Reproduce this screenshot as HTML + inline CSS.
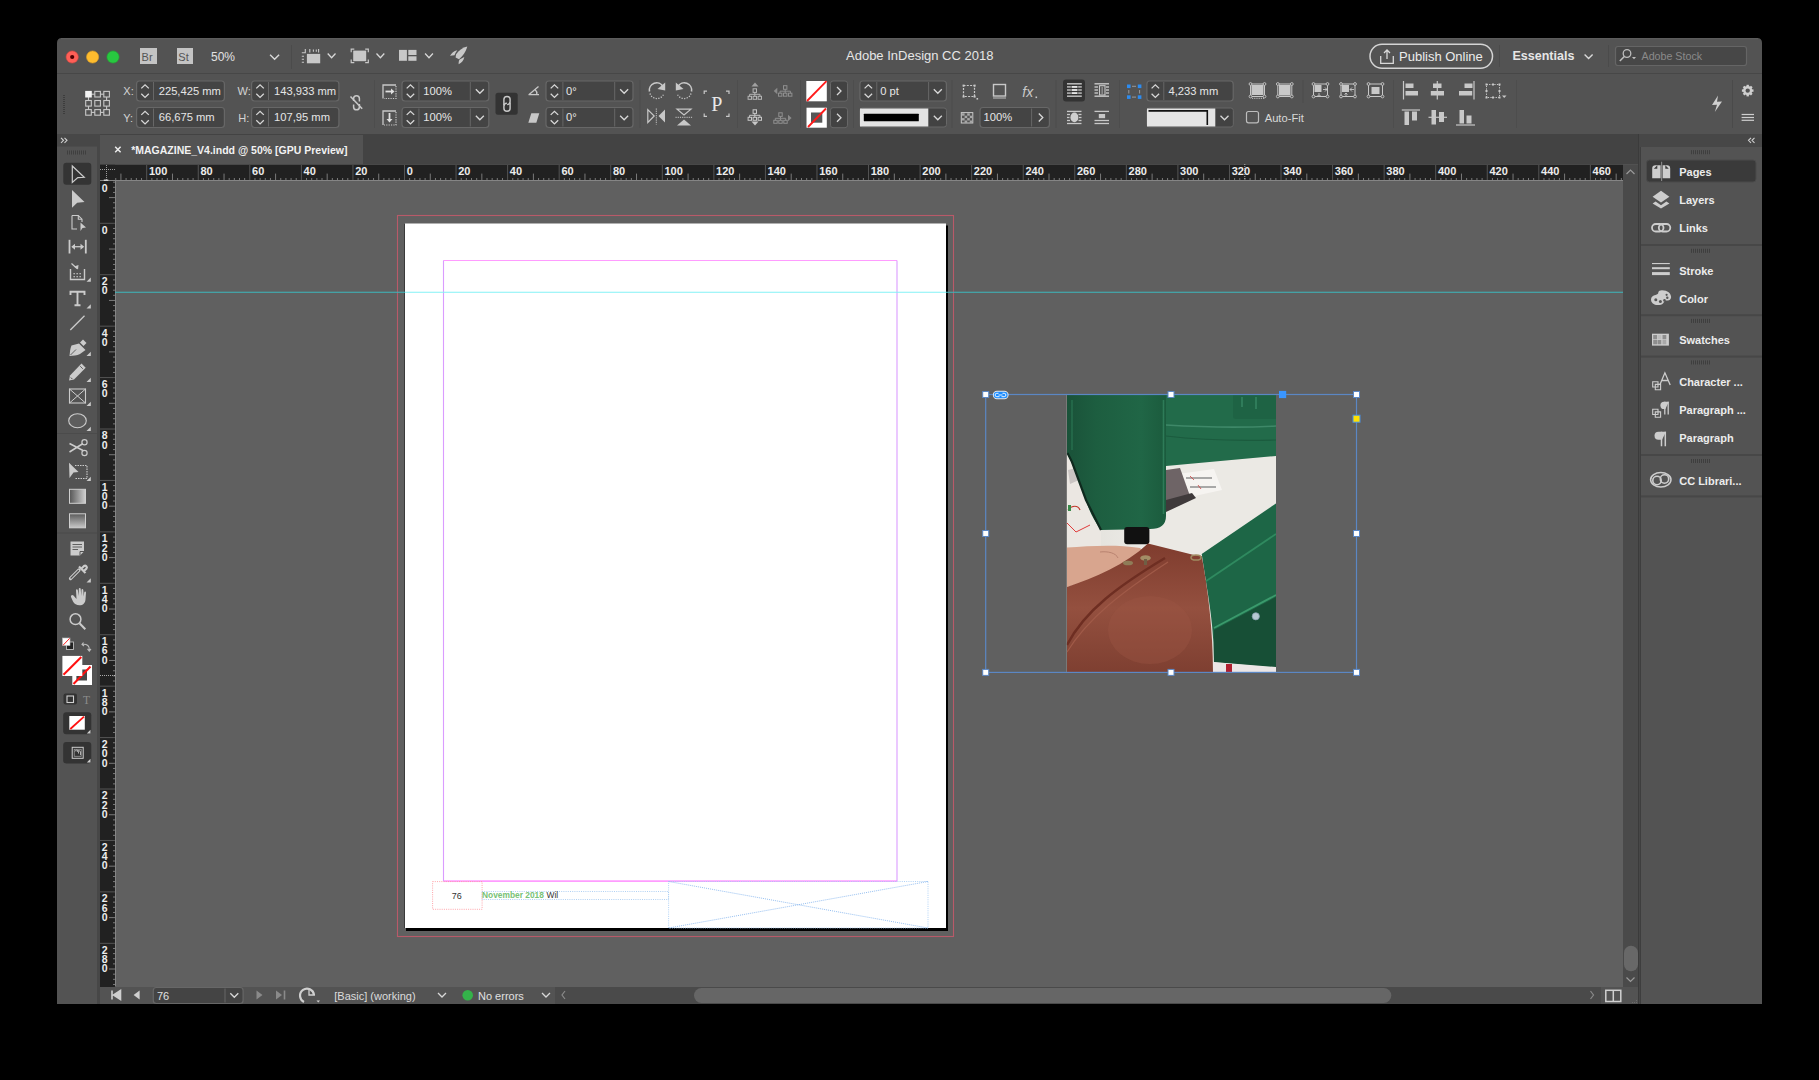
<!DOCTYPE html>
<html><head><meta charset="utf-8"><style>
html,body{margin:0;padding:0;width:1819px;height:1080px;overflow:hidden;background:#000}
svg{display:block}
text{font-family:"Liberation Sans",sans-serif;white-space:pre}
</style></head><body>
<svg width="1819" height="1080" viewBox="0 0 1819 1080">
<rect x="0" y="0" width="1819" height="1080" fill="#000"/>
<path d="M57 43 Q57 38 62 38 L1757 38 Q1762 38 1762 43 L1762 1004 L57 1004 Z" fill="#535353" />
<line x1="61" y1="38.6" x2="1758" y2="38.6" stroke="#5c5c5c" stroke-width="1.2" />
<rect x="57" y="73" width="1705" height="1" fill="#474747" rx="0" />
<circle cx="72.2" cy="57" r="6.1" fill="#fe5f57" stroke="#e2463f" stroke-width="0.6"/>
<circle cx="72.2" cy="57" r="2.1" fill="#4d0002"/>
<circle cx="92.6" cy="57" r="6.1" fill="#febc2e" stroke="#df9f24" stroke-width="0.6"/>
<circle cx="113" cy="57" r="6.1" fill="#28c840" stroke="#1fab2f" stroke-width="0.6"/>
<rect x="140" y="48" width="17" height="16" fill="#c4c4c4" rx="0" />
<text x="141.6" y="60.5" font-size="11" fill="#555" font-weight="400" text-anchor="start" >Br</text>
<rect x="177" y="48" width="16" height="16" fill="#c4c4c4" rx="0" />
<text x="178.3" y="60.5" font-size="11" fill="#555" font-weight="400" text-anchor="start" >St</text>
<text x="211" y="61" font-size="12" fill="#e2e2e2" font-weight="400" text-anchor="start" >50%</text>
<path d="M270.1 54.75 L274.6 59.25 L279.1 54.75" fill="none" stroke="#d8d8d8" stroke-width="1.4" />
<rect x="291" y="45" width="1" height="24" fill="#4b4b4b" rx="0" />
<rect x="306.9" y="53.9" width="13.3" height="9.4" fill="#c8c8c8" rx="0" />
<path d="M309.8 49V52.5M313.4 49.5V51.8M316.3 49.5V51.8M318.6 49V52.5M305.3 49V52.8H301.8M301.8 56.2H304M301.8 59.3H304M301.8 62.3H304" fill="none" stroke="#c8c8c8" stroke-width="1.1" />
<path d="M327.70000000000005 53.5 L331.6 57.7 L335.5 53.5" fill="none" stroke="#d8d8d8" stroke-width="1.3" />
<rect x="353.2" y="50.6" width="13" height="10.6" fill="#c8c8c8" rx="0" />
<path d="M351.2 52.3V49.2H354.3M365.2 49.2h3.1v3.1M368.3 59.6v3.1h-3.1M354.3 62.7h-3.1v-3.1" fill="none" stroke="#c8c8c8" stroke-width="1.2" />
<path d="M376.5 53.5 L380.4 57.7 L384.29999999999995 53.5" fill="none" stroke="#d8d8d8" stroke-width="1.3" />
<rect x="399" y="49.9" width="7.9" height="10.9" fill="#c8c8c8" rx="0" />
<rect x="408.3" y="49.9" width="8.2" height="5.1" fill="#c8c8c8" rx="0" />
<rect x="408.3" y="56.3" width="8.2" height="4.5" fill="#c8c8c8" rx="0" />
<path d="M425.1 53.5 L429 57.7 L432.9 53.5" fill="none" stroke="#d8d8d8" stroke-width="1.3" />
<path d="M467.3 46.5C462.5 47.5 458.5 50.5 456 54.5L455.6 57.5L459 59.2C462.5 56.5 466 51.5 467.3 46.5Z" fill="#c8c8c8" />
<path d="M450 55.8C451.5 53 453.8 51 457.3 50.2C456 51.8 455 53.5 454.5 55.2Z" fill="#c8c8c8" />
<path d="M464.3 57C463.6 60.5 461.6 62.8 458.6 64.3C458.6 62 459 60.5 459.6 59.6Z" fill="#c8c8c8" />
<text x="846" y="60.4" font-size="13" fill="#e6e6e6" font-weight="400" text-anchor="start" >Adobe InDesign CC 2018</text>
<rect x="1370" y="44.3" width="122.5" height="24" fill="none" stroke="#d4d4d4" stroke-width="1.5" rx="12" />
<path d="M1380.7 56v7.3h12.6V56M1387 50v9M1384 53l3-3 3 3" fill="none" stroke="#d8d8d8" stroke-width="1.3" />
<text x="1399" y="61" font-size="13" fill="#ececec" font-weight="400" text-anchor="start" >Publish Online</text>
<rect x="1499" y="45" width="1" height="22" fill="#4b4b4b" rx="0" />
<text x="1512.5" y="60" font-size="12.5" fill="#e6e6e6" font-weight="700" text-anchor="start" >Essentials</text>
<path d="M1584.6 54.5 L1588.6 58.5 L1592.6 54.5" fill="none" stroke="#d8d8d8" stroke-width="1.4" />
<rect x="1608" y="45" width="1" height="22" fill="#4b4b4b" rx="0" />
<rect x="1615.5" y="46.5" width="131" height="19" fill="#474747" stroke="#656565" stroke-width="1.2" rx="2.5" />
<circle cx="1627" cy="53.5" r="3.8" fill="none" stroke="#bdbdbd" stroke-width="1.3"/>
<path d="M1624.3 56.5L1619.8 61" fill="none" stroke="#bdbdbd" stroke-width="1.6" />
<path d="M1632 57h4l-2 2.3z" fill="#bdbdbd" />
<text x="1641.5" y="60" font-size="10.7" fill="#8a8a8a" font-weight="400" text-anchor="start" >Adobe Stock</text>
<rect x="63" y="95" width="2" height="1" fill="#3d3d3d" rx="0" />
<rect x="63" y="97" width="2" height="1" fill="#3d3d3d" rx="0" />
<rect x="63" y="99" width="2" height="1" fill="#3d3d3d" rx="0" />
<rect x="63" y="101" width="2" height="1" fill="#3d3d3d" rx="0" />
<rect x="63" y="103" width="2" height="1" fill="#3d3d3d" rx="0" />
<rect x="63" y="105" width="2" height="1" fill="#3d3d3d" rx="0" />
<rect x="63" y="107" width="2" height="1" fill="#3d3d3d" rx="0" />
<rect x="63" y="109" width="2" height="1" fill="#3d3d3d" rx="0" />
<rect x="63" y="111" width="2" height="1" fill="#3d3d3d" rx="0" />
<rect x="63" y="113" width="2" height="1" fill="#3d3d3d" rx="0" />
<line x1="88.5" y1="94.2" x2="97.6" y2="94.2" stroke="#c8c8c8" stroke-width="1.1" />
<line x1="97.6" y1="94.2" x2="106.6" y2="94.2" stroke="#c8c8c8" stroke-width="1.1" />
<line x1="88.5" y1="94.2" x2="88.5" y2="103.3" stroke="#c8c8c8" stroke-width="1.1" />
<line x1="88.5" y1="103.3" x2="88.5" y2="112.39999999999999" stroke="#c8c8c8" stroke-width="1.1" />
<line x1="106.6" y1="94.2" x2="106.6" y2="103.3" stroke="#c8c8c8" stroke-width="1.1" />
<line x1="106.6" y1="103.3" x2="106.6" y2="112.39999999999999" stroke="#c8c8c8" stroke-width="1.1" />
<line x1="88.5" y1="112.39999999999999" x2="97.6" y2="112.39999999999999" stroke="#c8c8c8" stroke-width="1.1" />
<line x1="97.6" y1="112.39999999999999" x2="106.6" y2="112.39999999999999" stroke="#c8c8c8" stroke-width="1.1" />
<rect x="85.2" y="90.9" width="6.6" height="6.6" fill="#f4f4f4" rx="0" />
<rect x="85.7" y="100.5" width="5.6" height="5.6" fill="#535353" stroke="#c8c8c8" stroke-width="1.1" rx="0" />
<rect x="85.7" y="109.6" width="5.6" height="5.6" fill="#535353" stroke="#c8c8c8" stroke-width="1.1" rx="0" />
<rect x="94.8" y="91.4" width="5.6" height="5.6" fill="#535353" stroke="#c8c8c8" stroke-width="1.1" rx="0" />
<rect x="94.8" y="100.5" width="5.6" height="5.6" fill="#535353" stroke="#c8c8c8" stroke-width="1.1" rx="0" />
<rect x="94.8" y="109.6" width="5.6" height="5.6" fill="#535353" stroke="#c8c8c8" stroke-width="1.1" rx="0" />
<rect x="103.8" y="91.4" width="5.6" height="5.6" fill="#535353" stroke="#c8c8c8" stroke-width="1.1" rx="0" />
<rect x="103.8" y="100.5" width="5.6" height="5.6" fill="#535353" stroke="#c8c8c8" stroke-width="1.1" rx="0" />
<rect x="103.8" y="109.6" width="5.6" height="5.6" fill="#535353" stroke="#c8c8c8" stroke-width="1.1" rx="0" />
<text x="123.3" y="94.8" font-size="11" fill="#d4d4d4" font-weight="400" text-anchor="start" >X:</text>
<text x="123.3" y="121.5" font-size="11" fill="#d4d4d4" font-weight="400" text-anchor="start" >Y:</text>
<rect x="136.6" y="81" width="87.8" height="20" fill="#444444" stroke="#676767" stroke-width="1.2" rx="3" />
<line x1="153.5" y1="82" x2="153.5" y2="100" stroke="#676767" stroke-width="1" />
<path d="M141.3 88.39999999999999 L145.05 84.8 L148.8 88.39999999999999" fill="none" stroke="#d8d8d8" stroke-width="1.3" />
<path d="M141.3 93.8 L145.05 97.39999999999999 L148.8 93.8" fill="none" stroke="#d8d8d8" stroke-width="1.3" />
<text x="158.7" y="94.8" font-size="11.2" fill="#e6e6e6" font-weight="400" text-anchor="start" >225,425 mm</text>
<rect x="136.6" y="107.5" width="87.8" height="20" fill="#444444" stroke="#676767" stroke-width="1.2" rx="3" />
<line x1="153.5" y1="108.5" x2="153.5" y2="126.5" stroke="#676767" stroke-width="1" />
<path d="M141.3 114.89999999999999 L145.05 111.3 L148.8 114.89999999999999" fill="none" stroke="#d8d8d8" stroke-width="1.3" />
<path d="M141.3 120.3 L145.05 123.89999999999999 L148.8 120.3" fill="none" stroke="#d8d8d8" stroke-width="1.3" />
<text x="158.7" y="121.3" font-size="11.2" fill="#e6e6e6" font-weight="400" text-anchor="start" >66,675 mm</text>
<text x="237.5" y="94.8" font-size="11" fill="#d4d4d4" font-weight="400" text-anchor="start" >W:</text>
<text x="238.3" y="121.5" font-size="11" fill="#d4d4d4" font-weight="400" text-anchor="start" >H:</text>
<rect x="251.6" y="81" width="87.3" height="20" fill="#444444" stroke="#676767" stroke-width="1.2" rx="3" />
<line x1="268.5" y1="82" x2="268.5" y2="100" stroke="#676767" stroke-width="1" />
<path d="M256.3 88.39999999999999 L260.05 84.8 L263.8 88.39999999999999" fill="none" stroke="#d8d8d8" stroke-width="1.3" />
<path d="M256.3 93.8 L260.05 97.39999999999999 L263.8 93.8" fill="none" stroke="#d8d8d8" stroke-width="1.3" />
<text x="274" y="94.8" font-size="11.2" fill="#e6e6e6" font-weight="400" text-anchor="start" >143,933 mm</text>
<rect x="251.6" y="107.5" width="87.3" height="20" fill="#444444" stroke="#676767" stroke-width="1.2" rx="3" />
<line x1="268.5" y1="108.5" x2="268.5" y2="126.5" stroke="#676767" stroke-width="1" />
<path d="M256.3 114.89999999999999 L260.05 111.3 L263.8 114.89999999999999" fill="none" stroke="#d8d8d8" stroke-width="1.3" />
<path d="M256.3 120.3 L260.05 123.89999999999999 L263.8 120.3" fill="none" stroke="#d8d8d8" stroke-width="1.3" />
<text x="274" y="121.3" font-size="11.2" fill="#e6e6e6" font-weight="400" text-anchor="start" >107,95 mm</text>
<path d="M353.6 101V98.6a2.9 2.9 0 0 1 5.8 0V101.5M353.6 104.5V106.9a2.9 2.9 0 0 0 5.8 0V104" fill="none" stroke="#c8c8c8" stroke-width="1.5" />
<line x1="350.5" y1="96.5" x2="362.2" y2="108.7" stroke="#c8c8c8" stroke-width="1.6" />
<rect x="374" y="80" width="1" height="48" fill="#4d4d4d" rx="0" />
<path d="M383 98.5V85H396" fill="none" stroke="#c8c8c8" stroke-width="1.3" />
<path d="M396 86V98.5H384" fill="none" stroke="#c8c8c8" stroke-width="1.2" stroke-dasharray="1.2 1.2"/>
<path d="M385.5 91.5H392" fill="none" stroke="#e0e0e0" stroke-width="1.8" />
<path d="M391 88.5L394.5 91.5L391 94.5Z" fill="#e0e0e0" />
<path d="M383 125V111H396" fill="none" stroke="#c8c8c8" stroke-width="1.3" />
<path d="M396 112V125H384" fill="none" stroke="#c8c8c8" stroke-width="1.2" stroke-dasharray="1.2 1.2"/>
<path d="M389.5 113V120" fill="none" stroke="#e0e0e0" stroke-width="1.8" />
<path d="M386.5 119L389.5 122.5L392.5 119Z" fill="#e0e0e0" />
<rect x="402.0" y="81" width="86.8" height="20" fill="#444444" stroke="#676767" stroke-width="1.2" rx="3" />
<line x1="418.9" y1="82" x2="418.9" y2="100" stroke="#676767" stroke-width="1" />
<path d="M406.7 88.39999999999999 L410.45 84.8 L414.2 88.39999999999999" fill="none" stroke="#d8d8d8" stroke-width="1.3" />
<path d="M406.7 93.8 L410.45 97.39999999999999 L414.2 93.8" fill="none" stroke="#d8d8d8" stroke-width="1.3" />
<line x1="470.3" y1="82" x2="470.3" y2="100" stroke="#676767" stroke-width="1" />
<path d="M475.85 89.3 L479.85 93.3 L483.85 89.3" fill="none" stroke="#d8d8d8" stroke-width="1.3" />
<text x="423.3" y="94.8" font-size="11.2" fill="#e6e6e6" font-weight="400" text-anchor="start" >100%</text>
<rect x="402.0" y="107.5" width="86.8" height="20" fill="#444444" stroke="#676767" stroke-width="1.2" rx="3" />
<line x1="418.9" y1="108.5" x2="418.9" y2="126.5" stroke="#676767" stroke-width="1" />
<path d="M406.7 114.89999999999999 L410.45 111.3 L414.2 114.89999999999999" fill="none" stroke="#d8d8d8" stroke-width="1.3" />
<path d="M406.7 120.3 L410.45 123.89999999999999 L414.2 120.3" fill="none" stroke="#d8d8d8" stroke-width="1.3" />
<line x1="470.3" y1="108.5" x2="470.3" y2="126.5" stroke="#676767" stroke-width="1" />
<path d="M475.85 115.8 L479.85 119.8 L483.85 115.8" fill="none" stroke="#d8d8d8" stroke-width="1.3" />
<text x="423.3" y="121.3" font-size="11.2" fill="#e6e6e6" font-weight="400" text-anchor="start" >100%</text>
<rect x="495.5" y="92.7" width="22.2" height="22.1" fill="#333333" rx="2.5" />
<path d="M503.9 105.2V99.6A3.1 3.1 0 0 1 510.1 99.6V101.6A3 3 0 0 1 507.1 104.6" fill="none" stroke="#c8c8c8" stroke-width="1.45" />
<path d="M510.1 102.6V108.2A3.1 3.1 0 0 1 503.9 108.2V106.2A3 3 0 0 1 506.9 103.2" fill="none" stroke="#c8c8c8" stroke-width="1.45" />
<path d="M528.5 94.7H539M528.8 94.7L538.5 86.5M535 89.5Q537.3 91.5 536.8 94.5" fill="none" stroke="#c8c8c8" stroke-width="1.3" />
<path d="M531.3 113.2H539.3L536.3 122.7H528.3Z" fill="#c8c8c8" />
<rect x="546.0" y="81" width="87.0" height="20" fill="#444444" stroke="#676767" stroke-width="1.2" rx="3" />
<line x1="562.9" y1="82" x2="562.9" y2="100" stroke="#676767" stroke-width="1" />
<path d="M550.6999999999999 88.39999999999999 L554.4499999999999 84.8 L558.1999999999999 88.39999999999999" fill="none" stroke="#d8d8d8" stroke-width="1.3" />
<path d="M550.6999999999999 93.8 L554.4499999999999 97.39999999999999 L558.1999999999999 93.8" fill="none" stroke="#d8d8d8" stroke-width="1.3" />
<line x1="614.7" y1="82" x2="614.7" y2="100" stroke="#676767" stroke-width="1" />
<path d="M620.15 89.3 L624.15 93.3 L628.15 89.3" fill="none" stroke="#d8d8d8" stroke-width="1.3" />
<text x="566" y="94.8" font-size="11.2" fill="#e6e6e6" font-weight="400" text-anchor="start" >0°</text>
<rect x="546.0" y="107.5" width="87.0" height="20" fill="#444444" stroke="#676767" stroke-width="1.2" rx="3" />
<line x1="562.9" y1="108.5" x2="562.9" y2="126.5" stroke="#676767" stroke-width="1" />
<path d="M550.6999999999999 114.89999999999999 L554.4499999999999 111.3 L558.1999999999999 114.89999999999999" fill="none" stroke="#d8d8d8" stroke-width="1.3" />
<path d="M550.6999999999999 120.3 L554.4499999999999 123.89999999999999 L558.1999999999999 120.3" fill="none" stroke="#d8d8d8" stroke-width="1.3" />
<line x1="614.7" y1="108.5" x2="614.7" y2="126.5" stroke="#676767" stroke-width="1" />
<path d="M620.15 115.8 L624.15 119.8 L628.15 115.8" fill="none" stroke="#d8d8d8" stroke-width="1.3" />
<text x="566" y="121.3" font-size="11.2" fill="#e6e6e6" font-weight="400" text-anchor="start" >0°</text>
<rect x="639.5" y="80" width="1" height="48" fill="#4d4d4d" rx="0" />
<path d="M649.5 91.5 A7.3 7.3 0 0 1 663 86.5" fill="none" stroke="#c8c8c8" stroke-width="1.6" />
<path d="M665.2 82.5L665.2 90.5L657.5 89Z" fill="#c8c8c8" />
<path d="M650 93.5 A7.3 7.3 0 0 0 663.5 94.5" fill="none" stroke="#c8c8c8" stroke-width="1.3" stroke-dasharray="1.2 1.4"/>
<path d="M691.5 91.5 A7.3 7.3 0 0 0 678 86.5" fill="none" stroke="#c8c8c8" stroke-width="1.6" />
<path d="M675.8 82.5L675.8 90.5L683.5 89Z" fill="#c8c8c8" />
<path d="M691 93.5 A7.3 7.3 0 0 1 677.5 94.5" fill="none" stroke="#c8c8c8" stroke-width="1.3" stroke-dasharray="1.2 1.4"/>
<path d="M647.8 109.6V122.5L654.2 116Z" fill="none" stroke="#c8c8c8" stroke-width="1.2" />
<path d="M665 109.6V122.5L658.5 116Z" fill="#c8c8c8" />
<line x1="656.3" y1="108.5" x2="656.3" y2="124.5" stroke="#c8c8c8" stroke-width="1" stroke-dasharray="1.2 1"/>
<path d="M677 109.2H691L684 115Z" fill="none" stroke="#c8c8c8" stroke-width="1.2" />
<path d="M677 125.5H691L684 119.5Z" fill="#c8c8c8" />
<line x1="675.5" y1="117.3" x2="692.5" y2="117.3" stroke="#c8c8c8" stroke-width="1" stroke-dasharray="1.2 1"/>
<path d="M704.2 94V91.2H707M726 91.2H729V94M729 113.5V116.3H726M707 116.3H704.2V113.5" fill="none" stroke="#c8c8c8" stroke-width="1.2" />
<text x="716.8" y="111.3" font-size="20" fill="#e8e8e8" font-weight="400" text-anchor="middle" style="font-family:'Liberation Serif'">P</text>
<rect x="737" y="80" width="1" height="48" fill="#4d4d4d" rx="0" />
<rect x="753.0999999999999" y="88.8" width="3.4" height="3.6" fill="none" stroke="#b4b4b4" stroke-width="1" rx="0" />
<path d="M754.8 92.39999999999999V94.3M749.5999999999999 96.3V94.3H760.0V96.3M754.8 94.3V96.3" fill="none" stroke="#b4b4b4" stroke-width="1" />
<rect x="748.0999999999999" y="96.3" width="3.4" height="3" fill="none" stroke="#b4b4b4" stroke-width="1" rx="0" />
<rect x="753.0999999999999" y="96.3" width="3.4" height="3" fill="none" stroke="#b4b4b4" stroke-width="1" rx="0" />
<rect x="758.0999999999999" y="96.3" width="3.4" height="3" fill="none" stroke="#b4b4b4" stroke-width="1" rx="0" />
<path d="M751.5 86.6L755 82.5L758.5 86.6Z" fill="#a0a0a0" />
<rect x="783.5" y="85.7" width="3.4" height="3.6" fill="none" stroke="#8f8f8f" stroke-width="1" rx="0" />
<path d="M785.2 89.3V91.2M780.0 93.2V91.2H790.4000000000001V93.2M785.2 91.2V93.2" fill="none" stroke="#8f8f8f" stroke-width="1" />
<rect x="778.5" y="93.2" width="3.4" height="3" fill="none" stroke="#8f8f8f" stroke-width="1" rx="0" />
<rect x="783.5" y="93.2" width="3.4" height="3" fill="none" stroke="#8f8f8f" stroke-width="1" rx="0" />
<rect x="788.5" y="93.2" width="3.4" height="3" fill="none" stroke="#8f8f8f" stroke-width="1" rx="0" />
<path d="M777.3 87.8L773.7 91L777.3 94.2Z" fill="#8a8a8a" />
<rect x="753.0999999999999" y="109.8" width="3.4" height="3.6" fill="none" stroke="#c8c8c8" stroke-width="1" rx="0" />
<path d="M754.8 113.39999999999999V115.3M749.5999999999999 117.3V115.3H760.0V117.3M754.8 115.3V117.3" fill="none" stroke="#c8c8c8" stroke-width="1" />
<rect x="748.0999999999999" y="117.3" width="3.4" height="3" fill="none" stroke="#c8c8c8" stroke-width="1" rx="0" />
<rect x="753.0999999999999" y="117.3" width="3.4" height="3" fill="none" stroke="#c8c8c8" stroke-width="1" rx="0" />
<rect x="758.0999999999999" y="117.3" width="3.4" height="3" fill="none" stroke="#c8c8c8" stroke-width="1" rx="0" />
<path d="M751.5 121.4L755 125.6L758.5 121.4Z" fill="#c8c8c8" />
<rect x="778.8" y="112.8" width="3.4" height="3.6" fill="none" stroke="#8f8f8f" stroke-width="1" rx="0" />
<path d="M780.5 116.39999999999999V118.3M775.3 120.3V118.3H785.7V120.3M780.5 118.3V120.3" fill="none" stroke="#8f8f8f" stroke-width="1" />
<rect x="773.8" y="120.3" width="3.4" height="3" fill="none" stroke="#8f8f8f" stroke-width="1" rx="0" />
<rect x="778.8" y="120.3" width="3.4" height="3" fill="none" stroke="#8f8f8f" stroke-width="1" rx="0" />
<rect x="783.8" y="120.3" width="3.4" height="3" fill="none" stroke="#8f8f8f" stroke-width="1" rx="0" />
<path d="M788 114.8L791.6 118L788 121.2Z" fill="#8a8a8a" />
<rect x="800" y="80" width="1" height="48" fill="#4d4d4d" rx="0" />
<rect x="806.3" y="81" width="20.5" height="20.3" fill="#ffffff" rx="0" />
<line x1="807" y1="101" x2="826.5" y2="81.2" stroke="#ff1a1a" stroke-width="1.8" />
<rect x="830.5" y="81" width="17" height="20.2" fill="#424242" stroke="#676767" stroke-width="1" rx="2.5" />
<path d="M837.0 87.0 L841.0 91 L837.0 95.0" fill="none" stroke="#d8d8d8" stroke-width="1.3" />
<rect x="806.5" y="107.7" width="20.3" height="20" fill="#ffffff" rx="0" />
<rect x="811" y="112.5" width="11.3" height="10.2" fill="#575757" rx="0" />
<line x1="808" y1="127" x2="826" y2="108.5" stroke="#ff1a1a" stroke-width="1.8" />
<rect x="830.5" y="107.7" width="17" height="20" fill="#424242" stroke="#676767" stroke-width="1" rx="2.5" />
<path d="M837.0 113.7 L841.0 117.7 L837.0 121.7" fill="none" stroke="#d8d8d8" stroke-width="1.3" />
<rect x="853" y="80" width="1" height="48" fill="#4d4d4d" rx="0" />
<rect x="859.9" y="81" width="86.5" height="20" fill="#444444" stroke="#676767" stroke-width="1.2" rx="3" />
<line x1="876.8" y1="82" x2="876.8" y2="100" stroke="#676767" stroke-width="1" />
<path d="M864.5999999999999 88.39999999999999 L868.3499999999999 84.8 L872.0999999999999 88.39999999999999" fill="none" stroke="#d8d8d8" stroke-width="1.3" />
<path d="M864.5999999999999 93.8 L868.3499999999999 97.39999999999999 L872.0999999999999 93.8" fill="none" stroke="#d8d8d8" stroke-width="1.3" />
<line x1="928.6" y1="82" x2="928.6" y2="100" stroke="#676767" stroke-width="1" />
<path d="M933.8000000000001 89.3 L937.8000000000001 93.3 L941.8000000000001 89.3" fill="none" stroke="#d8d8d8" stroke-width="1.3" />
<text x="880.2" y="94.8" font-size="11.2" fill="#e6e6e6" font-weight="400" text-anchor="start" >0 pt</text>
<rect x="859.8" y="108.0" width="86.7" height="19" fill="#424242" stroke="#676767" stroke-width="1" rx="2.5" />
<rect x="860" y="108.5" width="68.3" height="18" fill="#e4e4e4" rx="0" />
<rect x="863.8" y="113.8" width="55" height="7.5" fill="#000000" rx="0.5" />
<path d="M933.8 115.8 L937.8 119.8 L941.8 115.8" fill="none" stroke="#d8d8d8" stroke-width="1.3" />
<rect x="951.5" y="80" width="1" height="48" fill="#4d4d4d" rx="0" />
<path d="M963.5 85.5H974.5V96.5H963.5Z" fill="none" stroke="#c8c8c8" stroke-width="1.2" stroke-dasharray="2 1.3"/>
<rect x="962.6" y="84.6" width="2" height="2" fill="#c8c8c8" rx="0" />
<rect x="973.6" y="84.6" width="2" height="2" fill="#c8c8c8" rx="0" />
<rect x="962.6" y="95.6" width="2" height="2" fill="#c8c8c8" rx="0" />
<rect x="973.6" y="95.6" width="2" height="2" fill="#c8c8c8" rx="0" />
<rect x="976.5" y="98" width="1.6" height="1.6" fill="#c8c8c8" rx="0" />
<rect x="993.5" y="84.5" width="12" height="11.5" fill="none" stroke="#c8c8c8" stroke-width="1.4" rx="0" />
<rect x="993" y="97" width="13" height="2" fill="#8a8a8a" rx="0" />
<text x="1022.3" y="97.2" font-size="14" fill="#c8c8c8" font-weight="400" text-anchor="start" style="font-style:italic">fx</text>
<rect x="1035.5" y="96.5" width="1.6" height="1.6" fill="#c8c8c8" rx="0" />
<rect x="961.3" y="112.6" width="11.5" height="10.4" fill="none" stroke="#c8c8c8" stroke-width="1" rx="0" />
<rect x="962.0" y="113.3" width="2.6" height="2.4" fill="#a8a8a8" rx="0" />
<rect x="962.0" y="118.1" width="2.6" height="2.4" fill="#a8a8a8" rx="0" />
<rect x="964.6" y="115.7" width="2.6" height="2.4" fill="#a8a8a8" rx="0" />
<rect x="964.6" y="120.5" width="2.6" height="2.4" fill="#a8a8a8" rx="0" />
<rect x="967.2" y="113.3" width="2.6" height="2.4" fill="#a8a8a8" rx="0" />
<rect x="967.2" y="118.1" width="2.6" height="2.4" fill="#a8a8a8" rx="0" />
<rect x="969.8" y="115.7" width="2.6" height="2.4" fill="#a8a8a8" rx="0" />
<rect x="969.8" y="120.5" width="2.6" height="2.4" fill="#a8a8a8" rx="0" />
<rect x="980.0" y="107.5" width="69.39999999999999" height="20" fill="#444444" stroke="#676767" stroke-width="1.2" rx="3" />
<line x1="1031.6" y1="108.5" x2="1031.6" y2="126.5" stroke="#676767" stroke-width="1" />
<path d="M1038.8 113.5 L1042.8 117.5 L1038.8 121.5" fill="none" stroke="#d8d8d8" stroke-width="1.3" />
<text x="983.6" y="121.3" font-size="11.2" fill="#e6e6e6" font-weight="400" text-anchor="start" >100%</text>
<rect x="1055.5" y="80" width="1" height="48" fill="#4d4d4d" rx="0" />
<rect x="1063" y="79.5" width="22" height="22" fill="#333333" rx="3" />
<line x1="1067" y1="83.8" x2="1081.8" y2="83.8" stroke="#bdbdbd" stroke-width="1.5" />
<line x1="1067" y1="86.9" x2="1081.8" y2="86.9" stroke="#bdbdbd" stroke-width="1.5" />
<line x1="1067" y1="90" x2="1081.8" y2="90" stroke="#bdbdbd" stroke-width="1.5" />
<line x1="1067" y1="93.1" x2="1081.8" y2="93.1" stroke="#bdbdbd" stroke-width="1.5" />
<line x1="1067" y1="96.2" x2="1081.8" y2="96.2" stroke="#bdbdbd" stroke-width="1.5" />
<line x1="1071.5" y1="86.9" x2="1077.5" y2="86.9" stroke="#f0f0f0" stroke-width="1.5" />
<line x1="1071.5" y1="90" x2="1077.5" y2="90" stroke="#f0f0f0" stroke-width="1.5" />
<line x1="1071.5" y1="93.1" x2="1077.5" y2="93.1" stroke="#f0f0f0" stroke-width="1.5" />
<line x1="1071.2" y1="85.5" x2="1071.2" y2="94.5" stroke="#333333" stroke-width="0.6" />
<line x1="1077.8" y1="85.5" x2="1077.8" y2="94.5" stroke="#333333" stroke-width="0.6" />
<line x1="1094.5" y1="83.8" x2="1109" y2="83.8" stroke="#c8c8c8" stroke-width="1.4" />
<line x1="1094.5" y1="96.2" x2="1109" y2="96.2" stroke="#c8c8c8" stroke-width="1.4" />
<line x1="1094.5" y1="87" x2="1098" y2="87" stroke="#c8c8c8" stroke-width="1.4" />
<line x1="1106" y1="87" x2="1109" y2="87" stroke="#c8c8c8" stroke-width="1.4" />
<line x1="1094.5" y1="90" x2="1098" y2="90" stroke="#c8c8c8" stroke-width="1.4" />
<line x1="1106" y1="90" x2="1109" y2="90" stroke="#c8c8c8" stroke-width="1.4" />
<line x1="1094.5" y1="93" x2="1098" y2="93" stroke="#c8c8c8" stroke-width="1.4" />
<line x1="1106" y1="93" x2="1109" y2="93" stroke="#c8c8c8" stroke-width="1.4" />
<rect x="1099.5" y="85.7" width="5.5" height="9.3" fill="none" stroke="#c8c8c8" stroke-width="1.1" rx="0" />
<line x1="1102.2" y1="87" x2="1102.2" y2="94" stroke="#8a8a8a" stroke-width="1.6" />
<line x1="1067" y1="111.4" x2="1081.5" y2="111.4" stroke="#c8c8c8" stroke-width="1.3" />
<line x1="1067" y1="123.5" x2="1081.5" y2="123.5" stroke="#c8c8c8" stroke-width="1.3" />
<line x1="1067" y1="114.5" x2="1070" y2="114.5" stroke="#c8c8c8" stroke-width="1.3" />
<line x1="1078.5" y1="114.5" x2="1081.5" y2="114.5" stroke="#c8c8c8" stroke-width="1.3" />
<line x1="1067" y1="117.5" x2="1069.5" y2="117.5" stroke="#c8c8c8" stroke-width="1.3" />
<line x1="1079" y1="117.5" x2="1081.5" y2="117.5" stroke="#c8c8c8" stroke-width="1.3" />
<line x1="1067" y1="120.5" x2="1070" y2="120.5" stroke="#c8c8c8" stroke-width="1.3" />
<line x1="1078.5" y1="120.5" x2="1081.5" y2="120.5" stroke="#c8c8c8" stroke-width="1.3" />
<ellipse cx="1074.4" cy="117.4" rx="4" ry="4.8" fill="#cfcfcf"/>
<line x1="1094.5" y1="111.4" x2="1109" y2="111.4" stroke="#c8c8c8" stroke-width="1.3" />
<line x1="1094.5" y1="120.5" x2="1109" y2="120.5" stroke="#c8c8c8" stroke-width="1.3" />
<line x1="1094.5" y1="123.5" x2="1109" y2="123.5" stroke="#c8c8c8" stroke-width="1.3" />
<rect x="1098.8" y="114" width="6.3" height="4.2" fill="#c8c8c8" rx="0" />
<rect x="1119" y="80" width="1" height="48" fill="#4d4d4d" rx="0" />
<rect x="1127" y="84.5" width="3.6" height="3.6" fill="#2d8cf0" rx="0" />
<rect x="1137.8" y="84.5" width="3.6" height="3.6" fill="#2d8cf0" rx="0" />
<rect x="1127" y="95.3" width="3.6" height="3.6" fill="#2d8cf0" rx="0" />
<rect x="1137.8" y="95.3" width="3.6" height="3.6" fill="#2d8cf0" rx="0" />
<path d="M1132 86.3H1136M1132 97.1H1136M1128.8 90V93.5M1139.6 90V93.5" fill="none" stroke="#9a9a9a" stroke-width="1" />
<rect x="1146.8999999999999" y="81" width="86.3" height="20" fill="#444444" stroke="#676767" stroke-width="1.2" rx="3" />
<line x1="1163.8" y1="82" x2="1163.8" y2="100" stroke="#676767" stroke-width="1" />
<path d="M1151.6 88.39999999999999 L1155.35 84.8 L1159.1 88.39999999999999" fill="none" stroke="#d8d8d8" stroke-width="1.3" />
<path d="M1151.6 93.8 L1155.35 97.39999999999999 L1159.1 93.8" fill="none" stroke="#d8d8d8" stroke-width="1.3" />
<text x="1168.5" y="94.8" font-size="11.2" fill="#e6e6e6" font-weight="400" text-anchor="start" >4,233 mm</text>
<rect x="1146.8" y="108.0" width="86.5" height="19" fill="#424242" stroke="#676767" stroke-width="1" rx="2.5" />
<rect x="1147" y="108.5" width="68.3" height="18" fill="#e4e4e4" rx="0" />
<path d="M1148.5 110.9H1207.3V125" fill="none" stroke="#111" stroke-width="1.6" />
<path d="M1220.5 115.8 L1224.5 119.8 L1228.5 115.8" fill="none" stroke="#d8d8d8" stroke-width="1.3" />
<rect x="1250.5" y="84.0" width="14" height="12.5" fill="none" stroke="#c8c8c8" stroke-width="1" rx="0" />
<circle cx="1250.5" cy="84.0" r="1.4" fill="#535353" stroke="#c8c8c8" stroke-width="0.9"/>
<circle cx="1264.5" cy="84.0" r="1.4" fill="#535353" stroke="#c8c8c8" stroke-width="0.9"/>
<circle cx="1250.5" cy="96.5" r="1.4" fill="#535353" stroke="#c8c8c8" stroke-width="0.9"/>
<circle cx="1264.5" cy="96.5" r="1.4" fill="#535353" stroke="#c8c8c8" stroke-width="0.9"/>
<rect x="1251.5" y="85" width="12" height="10" fill="#c8c8c8" rx="0" />
<path d="M1252 98.3H1264" fill="none" stroke="#c8c8c8" stroke-width="1" stroke-dasharray="1.2 1"/>
<rect x="1277.8" y="84.0" width="14" height="12.5" fill="none" stroke="#c8c8c8" stroke-width="1" rx="0" />
<circle cx="1277.8" cy="84.0" r="1.4" fill="#535353" stroke="#c8c8c8" stroke-width="0.9"/>
<circle cx="1291.8" cy="84.0" r="1.4" fill="#535353" stroke="#c8c8c8" stroke-width="0.9"/>
<circle cx="1277.8" cy="96.5" r="1.4" fill="#535353" stroke="#c8c8c8" stroke-width="0.9"/>
<circle cx="1291.8" cy="96.5" r="1.4" fill="#535353" stroke="#c8c8c8" stroke-width="0.9"/>
<rect x="1279" y="85" width="11.5" height="10.5" fill="#c8c8c8" rx="0" />
<rect x="1302.5" y="80" width="1" height="23" fill="#4d4d4d" rx="0" />
<rect x="1313.5" y="84.0" width="14" height="12.5" fill="none" stroke="#c8c8c8" stroke-width="1" rx="0" />
<circle cx="1313.5" cy="84.0" r="1.4" fill="#535353" stroke="#c8c8c8" stroke-width="0.9"/>
<circle cx="1327.5" cy="84.0" r="1.4" fill="#535353" stroke="#c8c8c8" stroke-width="0.9"/>
<circle cx="1313.5" cy="96.5" r="1.4" fill="#535353" stroke="#c8c8c8" stroke-width="0.9"/>
<circle cx="1327.5" cy="96.5" r="1.4" fill="#535353" stroke="#c8c8c8" stroke-width="0.9"/>
<rect x="1314.5" y="85" width="7" height="7" fill="#c8c8c8" rx="0" />
<path d="M1323 89.5H1327M1325 87.5L1327 89.5L1325 91.5M1319 93V96M1317.5 95L1319 96.5L1320.5 95" fill="none" stroke="#c8c8c8" stroke-width="0.9" />
<rect x="1341.0" y="84.0" width="14" height="12.5" fill="none" stroke="#c8c8c8" stroke-width="1" rx="0" />
<circle cx="1341.0" cy="84.0" r="1.4" fill="#535353" stroke="#c8c8c8" stroke-width="0.9"/>
<circle cx="1355.0" cy="84.0" r="1.4" fill="#535353" stroke="#c8c8c8" stroke-width="0.9"/>
<circle cx="1341.0" cy="96.5" r="1.4" fill="#535353" stroke="#c8c8c8" stroke-width="0.9"/>
<circle cx="1355.0" cy="96.5" r="1.4" fill="#535353" stroke="#c8c8c8" stroke-width="0.9"/>
<rect x="1342" y="85" width="7" height="7" fill="#c8c8c8" rx="0" />
<path d="M1350 89.5H1354M1352 87.5L1350 89.5L1352 91.5M1346 93V96M1344.5 94.5L1346 93L1347.5 94.5" fill="none" stroke="#c8c8c8" stroke-width="0.9" />
<rect x="1368.5" y="84.0" width="14" height="12.5" fill="none" stroke="#c8c8c8" stroke-width="1" rx="0" />
<circle cx="1368.5" cy="84.0" r="1.4" fill="#535353" stroke="#c8c8c8" stroke-width="0.9"/>
<circle cx="1382.5" cy="84.0" r="1.4" fill="#535353" stroke="#c8c8c8" stroke-width="0.9"/>
<circle cx="1368.5" cy="96.5" r="1.4" fill="#535353" stroke="#c8c8c8" stroke-width="0.9"/>
<circle cx="1382.5" cy="96.5" r="1.4" fill="#535353" stroke="#c8c8c8" stroke-width="0.9"/>
<rect x="1371.5" y="87" width="8" height="7" fill="#c8c8c8" rx="0" />
<rect x="1246.5" y="111.5" width="12" height="11.3" fill="none" stroke="#bdbdbd" stroke-width="1.2" rx="2" />
<text x="1264.7" y="121.6" font-size="11.2" fill="#d8d8d8" font-weight="400" text-anchor="start" >Auto-Fit</text>
<rect x="1393" y="80" width="1" height="48" fill="#4d4d4d" rx="0" />
<line x1="1403.5" y1="81" x2="1403.5" y2="99.5" stroke="#c8c8c8" stroke-width="1.2" />
<rect x="1405.5" y="83.5" width="8" height="4.5" fill="#c8c8c8" rx="0" />
<rect x="1405.5" y="91" width="12.5" height="4.5" fill="#c8c8c8" rx="0" />
<line x1="1437.3" y1="81" x2="1437.3" y2="99.5" stroke="#c8c8c8" stroke-width="1.2" />
<rect x="1433" y="83.5" width="8.5" height="4.5" fill="#c8c8c8" rx="0" />
<rect x="1430.8" y="91" width="13.2" height="4.5" fill="#c8c8c8" rx="0" />
<line x1="1474" y1="81" x2="1474" y2="99.5" stroke="#c8c8c8" stroke-width="1.2" />
<rect x="1464.5" y="83.5" width="8" height="4.5" fill="#c8c8c8" rx="0" />
<rect x="1459" y="91" width="13.2" height="4.5" fill="#c8c8c8" rx="0" />
<path d="M1486.5 84.5H1499.5V97.5H1486.5Z" fill="none" stroke="#c8c8c8" stroke-width="1" stroke-dasharray="1.3 1.3"/>
<rect x="1485.5" y="83.5" width="2" height="2" fill="#c8c8c8" rx="0" />
<rect x="1492" y="83.5" width="2" height="2" fill="#c8c8c8" rx="0" />
<rect x="1498.5" y="83.5" width="2" height="2" fill="#c8c8c8" rx="0" />
<rect x="1485.5" y="90" width="2" height="2" fill="#c8c8c8" rx="0" />
<rect x="1498.5" y="90" width="2" height="2" fill="#c8c8c8" rx="0" />
<rect x="1485.5" y="96.5" width="2" height="2" fill="#c8c8c8" rx="0" />
<rect x="1492" y="96.5" width="2" height="2" fill="#c8c8c8" rx="0" />
<rect x="1498.5" y="96.5" width="2" height="2" fill="#c8c8c8" rx="0" />
<path d="M1502 95.5H1506.5L1504.2 98Z" fill="#c8c8c8" />
<line x1="1401.8" y1="110" x2="1420" y2="110" stroke="#c8c8c8" stroke-width="1.2" />
<rect x="1404.5" y="111.5" width="4.5" height="13.5" fill="#c8c8c8" rx="0" />
<rect x="1412" y="111.5" width="5" height="9" fill="#c8c8c8" rx="0" />
<line x1="1428.5" y1="117.3" x2="1447" y2="117.3" stroke="#c8c8c8" stroke-width="1.2" />
<rect x="1431.5" y="110" width="4.5" height="14.5" fill="#c8c8c8" rx="0" />
<rect x="1439" y="112" width="5" height="10" fill="#c8c8c8" rx="0" />
<line x1="1456" y1="125" x2="1475" y2="125" stroke="#c8c8c8" stroke-width="1.2" />
<rect x="1459.5" y="110" width="4.5" height="13.5" fill="#c8c8c8" rx="0" />
<rect x="1466.5" y="115.5" width="5" height="8" fill="#c8c8c8" rx="0" />
<rect x="1516" y="80" width="1" height="48" fill="#4d4d4d" rx="0" />
<path d="M1718 95.5L1712 105L1717 104.8L1714.8 112L1722 101.5L1717 101.8Z" fill="#cfcfcf" />
<rect x="1732" y="80" width="1" height="48" fill="#4a4a4a" rx="0" />
<circle cx="1747.7" cy="90.6" r="3.4" fill="none" stroke="#cfcfcf" stroke-width="2.4"/>
<rect x="1746.5" y="84.8" width="2.4" height="2.6" fill="#cfcfcf" transform="rotate(0 1747.7 90.6)"/>
<rect x="1746.5" y="84.8" width="2.4" height="2.6" fill="#cfcfcf" transform="rotate(45 1747.7 90.6)"/>
<rect x="1746.5" y="84.8" width="2.4" height="2.6" fill="#cfcfcf" transform="rotate(90 1747.7 90.6)"/>
<rect x="1746.5" y="84.8" width="2.4" height="2.6" fill="#cfcfcf" transform="rotate(135 1747.7 90.6)"/>
<rect x="1746.5" y="84.8" width="2.4" height="2.6" fill="#cfcfcf" transform="rotate(180 1747.7 90.6)"/>
<rect x="1746.5" y="84.8" width="2.4" height="2.6" fill="#cfcfcf" transform="rotate(225 1747.7 90.6)"/>
<rect x="1746.5" y="84.8" width="2.4" height="2.6" fill="#cfcfcf" transform="rotate(270 1747.7 90.6)"/>
<rect x="1746.5" y="84.8" width="2.4" height="2.6" fill="#cfcfcf" transform="rotate(315 1747.7 90.6)"/>
<line x1="1741.6" y1="114.5" x2="1754" y2="114.5" stroke="#cfcfcf" stroke-width="1.2" />
<line x1="1741.6" y1="117.5" x2="1754" y2="117.5" stroke="#cfcfcf" stroke-width="1.2" />
<line x1="1741.6" y1="120.3" x2="1754" y2="120.3" stroke="#cfcfcf" stroke-width="1.2" />
<rect x="57" y="134" width="40" height="12.5" fill="#474747" rx="0" />
<rect x="97" y="134" width="3" height="870" fill="#474747" rx="0" />
<path d="M61 137.8L63.5 140.3L61 142.8M64.5 137.8L67 140.3L64.5 142.8" fill="none" stroke="#d0d0d0" stroke-width="1.1" />
<rect x="67" y="150.5" width="1" height="4" fill="#3f3f3f" rx="0" />
<rect x="69" y="150.5" width="1" height="4" fill="#3f3f3f" rx="0" />
<rect x="71" y="150.5" width="1" height="4" fill="#3f3f3f" rx="0" />
<rect x="73" y="150.5" width="1" height="4" fill="#3f3f3f" rx="0" />
<rect x="75" y="150.5" width="1" height="4" fill="#3f3f3f" rx="0" />
<rect x="77" y="150.5" width="1" height="4" fill="#3f3f3f" rx="0" />
<rect x="79" y="150.5" width="1" height="4" fill="#3f3f3f" rx="0" />
<rect x="81" y="150.5" width="1" height="4" fill="#3f3f3f" rx="0" />
<rect x="83" y="150.5" width="1" height="4" fill="#3f3f3f" rx="0" />
<rect x="85" y="150.5" width="1" height="4" fill="#3f3f3f" rx="0" />
<rect x="100" y="134" width="1538" height="30" fill="#434343" rx="0" />
<rect x="100" y="135" width="263" height="29" fill="#535353" rx="0" />
<path d="M115.2 146.8L120.6 152.2M120.6 146.8L115.2 152.2" fill="none" stroke="#ececec" stroke-width="1.5" />
<text x="131.2" y="153.5" font-size="10.5" fill="#f2f2f2" font-weight="700" text-anchor="start" >*MAGAZINE_V4.indd @ 50% [GPU Preview]</text>
<rect x="115" y="180" width="1508" height="807" fill="#606060" rx="0" />
<rect x="100" y="164.8" width="1523" height="15.5" fill="#212121" rx="0" />
<rect x="100" y="180" width="15" height="807" fill="#212121" rx="0" />
<text x="148.89999999999998" y="175.3" font-size="11" fill="#ececec" font-weight="700" text-anchor="start" >100</text>
<text x="200.45999999999998" y="175.3" font-size="11" fill="#ececec" font-weight="700" text-anchor="start" >80</text>
<text x="252.01999999999998" y="175.3" font-size="11" fill="#ececec" font-weight="700" text-anchor="start" >60</text>
<text x="303.58" y="175.3" font-size="11" fill="#ececec" font-weight="700" text-anchor="start" >40</text>
<text x="355.14" y="175.3" font-size="11" fill="#ececec" font-weight="700" text-anchor="start" >20</text>
<text x="406.7" y="175.3" font-size="11" fill="#ececec" font-weight="700" text-anchor="start" >0</text>
<text x="458.26" y="175.3" font-size="11" fill="#ececec" font-weight="700" text-anchor="start" >20</text>
<text x="509.82" y="175.3" font-size="11" fill="#ececec" font-weight="700" text-anchor="start" >40</text>
<text x="561.3800000000001" y="175.3" font-size="11" fill="#ececec" font-weight="700" text-anchor="start" >60</text>
<text x="612.94" y="175.3" font-size="11" fill="#ececec" font-weight="700" text-anchor="start" >80</text>
<text x="664.5" y="175.3" font-size="11" fill="#ececec" font-weight="700" text-anchor="start" >100</text>
<text x="716.0600000000001" y="175.3" font-size="11" fill="#ececec" font-weight="700" text-anchor="start" >120</text>
<text x="767.6200000000001" y="175.3" font-size="11" fill="#ececec" font-weight="700" text-anchor="start" >140</text>
<text x="819.1800000000001" y="175.3" font-size="11" fill="#ececec" font-weight="700" text-anchor="start" >160</text>
<text x="870.74" y="175.3" font-size="11" fill="#ececec" font-weight="700" text-anchor="start" >180</text>
<text x="922.3000000000001" y="175.3" font-size="11" fill="#ececec" font-weight="700" text-anchor="start" >200</text>
<text x="973.8600000000001" y="175.3" font-size="11" fill="#ececec" font-weight="700" text-anchor="start" >220</text>
<text x="1025.42" y="175.3" font-size="11" fill="#ececec" font-weight="700" text-anchor="start" >240</text>
<text x="1076.98" y="175.3" font-size="11" fill="#ececec" font-weight="700" text-anchor="start" >260</text>
<text x="1128.5400000000002" y="175.3" font-size="11" fill="#ececec" font-weight="700" text-anchor="start" >280</text>
<text x="1180.1000000000001" y="175.3" font-size="11" fill="#ececec" font-weight="700" text-anchor="start" >300</text>
<text x="1231.66" y="175.3" font-size="11" fill="#ececec" font-weight="700" text-anchor="start" >320</text>
<text x="1283.22" y="175.3" font-size="11" fill="#ececec" font-weight="700" text-anchor="start" >340</text>
<text x="1334.78" y="175.3" font-size="11" fill="#ececec" font-weight="700" text-anchor="start" >360</text>
<text x="1386.3400000000001" y="175.3" font-size="11" fill="#ececec" font-weight="700" text-anchor="start" >380</text>
<text x="1437.9" y="175.3" font-size="11" fill="#ececec" font-weight="700" text-anchor="start" >400</text>
<text x="1489.46" y="175.3" font-size="11" fill="#ececec" font-weight="700" text-anchor="start" >420</text>
<text x="1541.0200000000002" y="175.3" font-size="11" fill="#ececec" font-weight="700" text-anchor="start" >440</text>
<text x="1592.5800000000002" y="175.3" font-size="11" fill="#ececec" font-weight="700" text-anchor="start" >460</text>
<path d="M146.70 165V180 M198.26 165V180 M249.82 165V180 M301.38 165V180 M352.94 165V180 M404.50 165V180 M456.06 165V180 M507.62 165V180 M559.18 165V180 M610.74 165V180 M662.30 165V180 M713.86 165V180 M765.42 165V180 M816.98 165V180 M868.54 165V180 M920.10 165V180 M971.66 165V180 M1023.22 165V180 M1074.78 165V180 M1126.34 165V180 M1177.90 165V180 M1229.46 165V180 M1281.02 165V180 M1332.58 165V180 M1384.14 165V180 M1435.70 165V180 M1487.26 165V180 M1538.82 165V180 M1590.38 165V180" fill="none" stroke="#555555" stroke-width="1" />
<path d="M115.76 178V180 M120.92 173.6V180 M126.08 178V180 M131.23 178V180 M136.39 178V180 M141.54 178V180 M151.86 178V180 M157.01 178V180 M162.17 178V180 M167.32 178V180 M172.48 173.6V180 M177.64 178V180 M182.79 178V180 M187.95 178V180 M193.10 178V180 M203.42 178V180 M208.57 178V180 M213.73 178V180 M218.88 178V180 M224.04 173.6V180 M229.20 178V180 M234.35 178V180 M239.51 178V180 M244.66 178V180 M254.98 178V180 M260.13 178V180 M265.29 178V180 M270.44 178V180 M275.60 173.6V180 M280.76 178V180 M285.91 178V180 M291.07 178V180 M296.22 178V180 M306.54 178V180 M311.69 178V180 M316.85 178V180 M322.00 178V180 M327.16 173.6V180 M332.32 178V180 M337.47 178V180 M342.63 178V180 M347.78 178V180 M358.10 178V180 M363.25 178V180 M368.41 178V180 M373.56 178V180 M378.72 173.6V180 M383.88 178V180 M389.03 178V180 M394.19 178V180 M399.34 178V180 M409.66 178V180 M414.81 178V180 M419.97 178V180 M425.12 178V180 M430.28 173.6V180 M435.44 178V180 M440.59 178V180 M445.75 178V180 M450.90 178V180 M461.22 178V180 M466.37 178V180 M471.53 178V180 M476.68 178V180 M481.84 173.6V180 M487.00 178V180 M492.15 178V180 M497.31 178V180 M502.46 178V180 M512.78 178V180 M517.93 178V180 M523.09 178V180 M528.24 178V180 M533.40 173.6V180 M538.56 178V180 M543.71 178V180 M548.87 178V180 M554.02 178V180 M564.34 178V180 M569.49 178V180 M574.65 178V180 M579.80 178V180 M584.96 173.6V180 M590.12 178V180 M595.27 178V180 M600.43 178V180 M605.58 178V180 M615.90 178V180 M621.05 178V180 M626.21 178V180 M631.36 178V180 M636.52 173.6V180 M641.68 178V180 M646.83 178V180 M651.99 178V180 M657.14 178V180 M667.46 178V180 M672.61 178V180 M677.77 178V180 M682.92 178V180 M688.08 173.6V180 M693.24 178V180 M698.39 178V180 M703.55 178V180 M708.70 178V180 M719.02 178V180 M724.17 178V180 M729.33 178V180 M734.48 178V180 M739.64 173.6V180 M744.80 178V180 M749.95 178V180 M755.11 178V180 M760.26 178V180 M770.58 178V180 M775.73 178V180 M780.89 178V180 M786.04 178V180 M791.20 173.6V180 M796.36 178V180 M801.51 178V180 M806.67 178V180 M811.82 178V180 M822.14 178V180 M827.29 178V180 M832.45 178V180 M837.60 178V180 M842.76 173.6V180 M847.92 178V180 M853.07 178V180 M858.23 178V180 M863.38 178V180 M873.70 178V180 M878.85 178V180 M884.01 178V180 M889.16 178V180 M894.32 173.6V180 M899.48 178V180 M904.63 178V180 M909.79 178V180 M914.94 178V180 M925.26 178V180 M930.41 178V180 M935.57 178V180 M940.72 178V180 M945.88 173.6V180 M951.04 178V180 M956.19 178V180 M961.35 178V180 M966.50 178V180 M976.82 178V180 M981.97 178V180 M987.13 178V180 M992.28 178V180 M997.44 173.6V180 M1002.60 178V180 M1007.75 178V180 M1012.91 178V180 M1018.06 178V180 M1028.38 178V180 M1033.53 178V180 M1038.69 178V180 M1043.84 178V180 M1049.00 173.6V180 M1054.16 178V180 M1059.31 178V180 M1064.47 178V180 M1069.62 178V180 M1079.94 178V180 M1085.09 178V180 M1090.25 178V180 M1095.40 178V180 M1100.56 173.6V180 M1105.72 178V180 M1110.87 178V180 M1116.03 178V180 M1121.18 178V180 M1131.50 178V180 M1136.65 178V180 M1141.81 178V180 M1146.96 178V180 M1152.12 173.6V180 M1157.28 178V180 M1162.43 178V180 M1167.59 178V180 M1172.74 178V180 M1183.06 178V180 M1188.21 178V180 M1193.37 178V180 M1198.52 178V180 M1203.68 173.6V180 M1208.84 178V180 M1213.99 178V180 M1219.15 178V180 M1224.30 178V180 M1234.62 178V180 M1239.77 178V180 M1244.93 178V180 M1250.08 178V180 M1255.24 173.6V180 M1260.40 178V180 M1265.55 178V180 M1270.71 178V180 M1275.86 178V180 M1286.18 178V180 M1291.33 178V180 M1296.49 178V180 M1301.64 178V180 M1306.80 173.6V180 M1311.96 178V180 M1317.11 178V180 M1322.27 178V180 M1327.42 178V180 M1337.74 178V180 M1342.89 178V180 M1348.05 178V180 M1353.20 178V180 M1358.36 173.6V180 M1363.52 178V180 M1368.67 178V180 M1373.83 178V180 M1378.98 178V180 M1389.30 178V180 M1394.45 178V180 M1399.61 178V180 M1404.76 178V180 M1409.92 173.6V180 M1415.08 178V180 M1420.23 178V180 M1425.39 178V180 M1430.54 178V180 M1440.86 178V180 M1446.01 178V180 M1451.17 178V180 M1456.32 178V180 M1461.48 173.6V180 M1466.64 178V180 M1471.79 178V180 M1476.95 178V180 M1482.10 178V180 M1492.42 178V180 M1497.57 178V180 M1502.73 178V180 M1507.88 178V180 M1513.04 173.6V180 M1518.20 178V180 M1523.35 178V180 M1528.51 178V180 M1533.66 178V180 M1543.98 178V180 M1549.13 178V180 M1554.29 178V180 M1559.44 178V180 M1564.60 173.6V180 M1569.76 178V180 M1574.91 178V180 M1580.07 178V180 M1585.22 178V180 M1595.54 178V180 M1600.69 178V180 M1605.85 178V180 M1611.00 178V180 M1616.16 173.6V180 M1621.32 178V180" fill="none" stroke="#7a7a7a" stroke-width="1" />
<line x1="115" y1="180.5" x2="1623" y2="180.5" stroke="#858585" stroke-width="1" />
<rect x="100" y="164.8" width="15" height="15.5" fill="#212121" rx="0" />
<path d="M106.5 165V180M100 169.5H115" fill="none" stroke="#bdbdbd" stroke-width="0.8" stroke-dasharray="1 1"/>
<line x1="100" y1="180.5" x2="115" y2="180.5" stroke="#858585" stroke-width="1" />
<rect x="103.8" y="179.5" width="4.5" height="1.5" fill="#cfcfcf" rx="0" />
<path d="M100 223.30H115 M100 274.73H115 M100 326.16H115 M100 377.59H115 M100 429.02H115 M100 480.45H115 M100 531.88H115 M100 583.31H115 M100 634.74H115 M100 686.17H115 M100 737.60H115 M100 789.03H115 M100 840.46H115 M100 891.89H115 M100 943.32H115" fill="none" stroke="#555555" stroke-width="1" />
<path d="M113 182.16H115 M113 187.30H115 M113 192.44H115 M109 197.59H115 M113 202.73H115 M113 207.87H115 M113 213.01H115 M113 218.16H115 M113 228.44H115 M113 233.59H115 M113 238.73H115 M113 243.87H115 M109 249.02H115 M113 254.16H115 M113 259.30H115 M113 264.44H115 M113 269.59H115 M113 279.87H115 M113 285.02H115 M113 290.16H115 M113 295.30H115 M109 300.44H115 M113 305.59H115 M113 310.73H115 M113 315.87H115 M113 321.02H115 M113 331.30H115 M113 336.45H115 M113 341.59H115 M113 346.73H115 M109 351.88H115 M113 357.02H115 M113 362.16H115 M113 367.30H115 M113 372.45H115 M113 382.73H115 M113 387.88H115 M113 393.02H115 M113 398.16H115 M109 403.31H115 M113 408.45H115 M113 413.59H115 M113 418.73H115 M113 423.88H115 M113 434.16H115 M113 439.31H115 M113 444.45H115 M113 449.59H115 M109 454.73H115 M113 459.88H115 M113 465.02H115 M113 470.16H115 M113 475.31H115 M113 485.59H115 M113 490.74H115 M113 495.88H115 M113 501.02H115 M109 506.16H115 M113 511.31H115 M113 516.45H115 M113 521.59H115 M113 526.74H115 M113 537.02H115 M113 542.17H115 M113 547.31H115 M113 552.45H115 M109 557.60H115 M113 562.74H115 M113 567.88H115 M113 573.02H115 M113 578.17H115 M113 588.45H115 M113 593.60H115 M113 598.74H115 M113 603.88H115 M109 609.02H115 M113 614.17H115 M113 619.31H115 M113 624.45H115 M113 629.60H115 M113 639.88H115 M113 645.03H115 M113 650.17H115 M113 655.31H115 M109 660.46H115 M113 665.60H115 M113 670.74H115 M113 675.88H115 M113 681.03H115 M113 691.31H115 M113 696.46H115 M113 701.60H115 M113 706.74H115 M109 711.89H115 M113 717.03H115 M113 722.17H115 M113 727.31H115 M113 732.46H115 M113 742.74H115 M113 747.89H115 M113 753.03H115 M113 758.17H115 M109 763.31H115 M113 768.46H115 M113 773.60H115 M113 778.74H115 M113 783.89H115 M113 794.17H115 M113 799.32H115 M113 804.46H115 M113 809.60H115 M109 814.75H115 M113 819.89H115 M113 825.03H115 M113 830.17H115 M113 835.32H115 M113 845.60H115 M113 850.75H115 M113 855.89H115 M113 861.03H115 M109 866.18H115 M113 871.32H115 M113 876.46H115 M113 881.60H115 M113 886.75H115 M113 897.03H115 M113 902.18H115 M113 907.32H115 M113 912.46H115 M109 917.61H115 M113 922.75H115 M113 927.89H115 M113 933.03H115 M113 938.18H115 M113 948.46H115 M113 953.61H115 M113 958.75H115 M113 963.89H115 M109 969.03H115 M113 974.18H115 M113 979.32H115 M113 984.46H115" fill="none" stroke="#7a7a7a" stroke-width="1" />
<line x1="115.5" y1="180" x2="115.5" y2="986" stroke="#858585" stroke-width="1" />
<text x="101.8" y="191.57000000000002" font-size="10.5" fill="#ececec" font-weight="700" text-anchor="start" >0</text>
<text x="101.8" y="233.70000000000002" font-size="10.5" fill="#ececec" font-weight="700" text-anchor="start" >0</text>
<text x="101.8" y="285.13" font-size="10.5" fill="#ececec" font-weight="700" text-anchor="start" >2</text>
<text x="101.8" y="294.43" font-size="10.5" fill="#ececec" font-weight="700" text-anchor="start" >0</text>
<text x="101.8" y="336.56" font-size="10.5" fill="#ececec" font-weight="700" text-anchor="start" >4</text>
<text x="101.8" y="345.86" font-size="10.5" fill="#ececec" font-weight="700" text-anchor="start" >0</text>
<text x="101.8" y="387.99" font-size="10.5" fill="#ececec" font-weight="700" text-anchor="start" >6</text>
<text x="101.8" y="397.29" font-size="10.5" fill="#ececec" font-weight="700" text-anchor="start" >0</text>
<text x="101.8" y="439.41999999999996" font-size="10.5" fill="#ececec" font-weight="700" text-anchor="start" >8</text>
<text x="101.8" y="448.71999999999997" font-size="10.5" fill="#ececec" font-weight="700" text-anchor="start" >0</text>
<text x="101.8" y="490.84999999999997" font-size="10.5" fill="#ececec" font-weight="700" text-anchor="start" >1</text>
<text x="101.8" y="500.15" font-size="10.5" fill="#ececec" font-weight="700" text-anchor="start" >0</text>
<text x="101.8" y="509.45" font-size="10.5" fill="#ececec" font-weight="700" text-anchor="start" >0</text>
<text x="101.8" y="542.28" font-size="10.5" fill="#ececec" font-weight="700" text-anchor="start" >1</text>
<text x="101.8" y="551.5799999999999" font-size="10.5" fill="#ececec" font-weight="700" text-anchor="start" >2</text>
<text x="101.8" y="560.88" font-size="10.5" fill="#ececec" font-weight="700" text-anchor="start" >0</text>
<text x="101.8" y="593.7099999999999" font-size="10.5" fill="#ececec" font-weight="700" text-anchor="start" >1</text>
<text x="101.8" y="603.0099999999999" font-size="10.5" fill="#ececec" font-weight="700" text-anchor="start" >4</text>
<text x="101.8" y="612.31" font-size="10.5" fill="#ececec" font-weight="700" text-anchor="start" >0</text>
<text x="101.8" y="645.14" font-size="10.5" fill="#ececec" font-weight="700" text-anchor="start" >1</text>
<text x="101.8" y="654.4399999999999" font-size="10.5" fill="#ececec" font-weight="700" text-anchor="start" >6</text>
<text x="101.8" y="663.74" font-size="10.5" fill="#ececec" font-weight="700" text-anchor="start" >0</text>
<text x="101.8" y="696.57" font-size="10.5" fill="#ececec" font-weight="700" text-anchor="start" >1</text>
<text x="101.8" y="705.87" font-size="10.5" fill="#ececec" font-weight="700" text-anchor="start" >8</text>
<text x="101.8" y="715.1700000000001" font-size="10.5" fill="#ececec" font-weight="700" text-anchor="start" >0</text>
<text x="101.8" y="747.9999999999999" font-size="10.5" fill="#ececec" font-weight="700" text-anchor="start" >2</text>
<text x="101.8" y="757.2999999999998" font-size="10.5" fill="#ececec" font-weight="700" text-anchor="start" >0</text>
<text x="101.8" y="766.5999999999999" font-size="10.5" fill="#ececec" font-weight="700" text-anchor="start" >0</text>
<text x="101.8" y="799.43" font-size="10.5" fill="#ececec" font-weight="700" text-anchor="start" >2</text>
<text x="101.8" y="808.7299999999999" font-size="10.5" fill="#ececec" font-weight="700" text-anchor="start" >2</text>
<text x="101.8" y="818.03" font-size="10.5" fill="#ececec" font-weight="700" text-anchor="start" >0</text>
<text x="101.8" y="850.86" font-size="10.5" fill="#ececec" font-weight="700" text-anchor="start" >2</text>
<text x="101.8" y="860.16" font-size="10.5" fill="#ececec" font-weight="700" text-anchor="start" >4</text>
<text x="101.8" y="869.46" font-size="10.5" fill="#ececec" font-weight="700" text-anchor="start" >0</text>
<text x="101.8" y="902.2900000000001" font-size="10.5" fill="#ececec" font-weight="700" text-anchor="start" >2</text>
<text x="101.8" y="911.59" font-size="10.5" fill="#ececec" font-weight="700" text-anchor="start" >6</text>
<text x="101.8" y="920.8900000000001" font-size="10.5" fill="#ececec" font-weight="700" text-anchor="start" >0</text>
<text x="101.8" y="953.7199999999999" font-size="10.5" fill="#ececec" font-weight="700" text-anchor="start" >2</text>
<text x="101.8" y="963.0199999999999" font-size="10.5" fill="#ececec" font-weight="700" text-anchor="start" >8</text>
<text x="101.8" y="972.3199999999999" font-size="10.5" fill="#ececec" font-weight="700" text-anchor="start" >0</text>
<line x1="1244.8" y1="164" x2="1244.8" y2="180" stroke="#cfcfcf" stroke-width="0.8" stroke-dasharray="1 1"/>
<line x1="100" y1="675.5" x2="115" y2="675.5" stroke="#cfcfcf" stroke-width="0.8" stroke-dasharray="1 1"/>
<rect x="1623" y="164.8" width="15" height="822.2" fill="#4a4a4a" rx="0" />
<path d="M1626.5 174.0 L1630.5 170.0 L1634.5 174.0" fill="none" stroke="#9a9a9a" stroke-width="1.2" />
<rect x="1624" y="945.7" width="14" height="25.5" fill="#686868" rx="7" />
<path d="M1626.5 977.5 L1630.5 981.5 L1634.5 977.5" fill="none" stroke="#9a9a9a" stroke-width="1.2" />
<rect x="1638" y="134" width="3" height="870" fill="#474747" rx="0" />
<line x1="1638.5" y1="134" x2="1638.5" y2="1004" stroke="#3b3b3b" stroke-width="1" />
<line x1="1640.5" y1="147" x2="1640.5" y2="1004" stroke="#3e3e3e" stroke-width="1" />
<rect x="100" y="987" width="1538" height="17" fill="#535353" rx="0" />
<path d="M112 990.5V999.5M120.5 990.5L113.5 995L120.5 999.5Z" fill="none" stroke="#cfcfcf" stroke-width="1.6" />
<path d="M120.5 990.5L113.5 995L120.5 999.5Z" fill="#cfcfcf" />
<path d="M139.6 990.5L133.6 995L139.6 999.5Z" fill="#cfcfcf" />
<rect x="153.29999999999998" y="987.5" width="89.8" height="16" fill="#444444" stroke="#676767" stroke-width="1.2" rx="3" />
<line x1="225" y1="988.5" x2="225" y2="1002.5" stroke="#676767" stroke-width="1" />
<path d="M230.3 993.3 L234.3 997.3 L238.3 993.3" fill="none" stroke="#d8d8d8" stroke-width="1.3" />
<text x="157" y="999.8" font-size="11" fill="#e0e0e0" font-weight="400" text-anchor="start" >76</text>
<path d="M256.5 990.5L262.5 995L256.5 999.5Z" fill="#8a8a8a" />
<path d="M276 990.5L282 995L276 999.5Z" fill="#8a8a8a" />
<line x1="284.5" y1="990.5" x2="284.5" y2="999.5" stroke="#8a8a8a" stroke-width="1.6" />
<path d="M304 1002 A7 7 0 1 1 314 995" fill="none" stroke="#cfcfcf" stroke-width="2.2" />
<path d="M309 989V995H315" fill="none" stroke="#cfcfcf" stroke-width="1.3" />
<path d="M316.5 1000.5h3.5l-1.75 2z" fill="#cfcfcf" />
<text x="334.3" y="999.8" font-size="11" fill="#dcdcdc" font-weight="400" text-anchor="start" >[Basic] (working)</text>
<path d="M438.0 993.0 L442 997.0 L446.0 993.0" fill="none" stroke="#d8d8d8" stroke-width="1.3" />
<circle cx="467.7" cy="995.3" r="5.3" fill="#34b24a"/>
<text x="478" y="999.8" font-size="11" fill="#e0e0e0" font-weight="400" text-anchor="start" >No errors</text>
<path d="M542.0 993.0 L546 997.0 L550.0 993.0" fill="none" stroke="#d8d8d8" stroke-width="1.3" />
<rect x="555" y="987" width="1046" height="17" fill="#4a4a4a" rx="0" />
<path d="M565 991L562 995L565 999" fill="none" stroke="#8a8a8a" stroke-width="1.2" />
<rect x="694" y="988" width="697.3" height="15" fill="#666666" rx="7.5" />
<path d="M1590.5 991L1593.5 995L1590.5 999" fill="none" stroke="#8a8a8a" stroke-width="1.2" />
<rect x="1605.8" y="990.3" width="15" height="11.2" fill="none" stroke="#d0d0d0" stroke-width="1.5" rx="0" />
<line x1="1613.3" y1="990.3" x2="1613.3" y2="1001.5" stroke="#d0d0d0" stroke-width="1.5" />
<rect x="1634" y="1002" width="1" height="1" fill="#6a6a6a" rx="0" />
<rect x="1636" y="1000" width="1" height="1" fill="#6a6a6a" rx="0" />
<rect x="1636" y="1002" width="1" height="1" fill="#6a6a6a" rx="0" />
<rect x="1632" y="1002" width="1" height="1" fill="#6a6a6a" rx="0" />
<rect x="1641" y="134" width="121" height="13" fill="#474747" rx="0" />
<path d="M1754.5 137.8L1752 140.3L1754.5 142.8M1751 137.8L1748.5 140.3L1751 142.8" fill="none" stroke="#d0d0d0" stroke-width="1.1" />
<rect x="1641" y="244" width="121" height="2" fill="#474747" rx="0" />
<rect x="1641" y="314.2" width="121" height="2" fill="#474747" rx="0" />
<rect x="1641" y="355.6" width="121" height="2" fill="#474747" rx="0" />
<rect x="1641" y="454" width="121" height="2" fill="#474747" rx="0" />
<rect x="1641" y="495.4" width="121" height="2" fill="#474747" rx="0" />
<rect x="1691" y="150.2" width="1" height="4" fill="#3e3e3e" rx="0" />
<rect x="1693" y="150.2" width="1" height="4" fill="#3e3e3e" rx="0" />
<rect x="1695" y="150.2" width="1" height="4" fill="#3e3e3e" rx="0" />
<rect x="1697" y="150.2" width="1" height="4" fill="#3e3e3e" rx="0" />
<rect x="1699" y="150.2" width="1" height="4" fill="#3e3e3e" rx="0" />
<rect x="1701" y="150.2" width="1" height="4" fill="#3e3e3e" rx="0" />
<rect x="1703" y="150.2" width="1" height="4" fill="#3e3e3e" rx="0" />
<rect x="1705" y="150.2" width="1" height="4" fill="#3e3e3e" rx="0" />
<rect x="1707" y="150.2" width="1" height="4" fill="#3e3e3e" rx="0" />
<rect x="1709" y="150.2" width="1" height="4" fill="#3e3e3e" rx="0" />
<rect x="1691" y="248.8" width="1" height="4" fill="#3e3e3e" rx="0" />
<rect x="1693" y="248.8" width="1" height="4" fill="#3e3e3e" rx="0" />
<rect x="1695" y="248.8" width="1" height="4" fill="#3e3e3e" rx="0" />
<rect x="1697" y="248.8" width="1" height="4" fill="#3e3e3e" rx="0" />
<rect x="1699" y="248.8" width="1" height="4" fill="#3e3e3e" rx="0" />
<rect x="1701" y="248.8" width="1" height="4" fill="#3e3e3e" rx="0" />
<rect x="1703" y="248.8" width="1" height="4" fill="#3e3e3e" rx="0" />
<rect x="1705" y="248.8" width="1" height="4" fill="#3e3e3e" rx="0" />
<rect x="1707" y="248.8" width="1" height="4" fill="#3e3e3e" rx="0" />
<rect x="1709" y="248.8" width="1" height="4" fill="#3e3e3e" rx="0" />
<rect x="1691" y="318.9" width="1" height="4" fill="#3e3e3e" rx="0" />
<rect x="1693" y="318.9" width="1" height="4" fill="#3e3e3e" rx="0" />
<rect x="1695" y="318.9" width="1" height="4" fill="#3e3e3e" rx="0" />
<rect x="1697" y="318.9" width="1" height="4" fill="#3e3e3e" rx="0" />
<rect x="1699" y="318.9" width="1" height="4" fill="#3e3e3e" rx="0" />
<rect x="1701" y="318.9" width="1" height="4" fill="#3e3e3e" rx="0" />
<rect x="1703" y="318.9" width="1" height="4" fill="#3e3e3e" rx="0" />
<rect x="1705" y="318.9" width="1" height="4" fill="#3e3e3e" rx="0" />
<rect x="1707" y="318.9" width="1" height="4" fill="#3e3e3e" rx="0" />
<rect x="1709" y="318.9" width="1" height="4" fill="#3e3e3e" rx="0" />
<rect x="1691" y="360.4" width="1" height="4" fill="#3e3e3e" rx="0" />
<rect x="1693" y="360.4" width="1" height="4" fill="#3e3e3e" rx="0" />
<rect x="1695" y="360.4" width="1" height="4" fill="#3e3e3e" rx="0" />
<rect x="1697" y="360.4" width="1" height="4" fill="#3e3e3e" rx="0" />
<rect x="1699" y="360.4" width="1" height="4" fill="#3e3e3e" rx="0" />
<rect x="1701" y="360.4" width="1" height="4" fill="#3e3e3e" rx="0" />
<rect x="1703" y="360.4" width="1" height="4" fill="#3e3e3e" rx="0" />
<rect x="1705" y="360.4" width="1" height="4" fill="#3e3e3e" rx="0" />
<rect x="1707" y="360.4" width="1" height="4" fill="#3e3e3e" rx="0" />
<rect x="1709" y="360.4" width="1" height="4" fill="#3e3e3e" rx="0" />
<rect x="1691" y="459" width="1" height="4" fill="#3e3e3e" rx="0" />
<rect x="1693" y="459" width="1" height="4" fill="#3e3e3e" rx="0" />
<rect x="1695" y="459" width="1" height="4" fill="#3e3e3e" rx="0" />
<rect x="1697" y="459" width="1" height="4" fill="#3e3e3e" rx="0" />
<rect x="1699" y="459" width="1" height="4" fill="#3e3e3e" rx="0" />
<rect x="1701" y="459" width="1" height="4" fill="#3e3e3e" rx="0" />
<rect x="1703" y="459" width="1" height="4" fill="#3e3e3e" rx="0" />
<rect x="1705" y="459" width="1" height="4" fill="#3e3e3e" rx="0" />
<rect x="1707" y="459" width="1" height="4" fill="#3e3e3e" rx="0" />
<rect x="1709" y="459" width="1" height="4" fill="#3e3e3e" rx="0" />
<rect x="1646.5" y="160" width="109.5" height="22" fill="#3a3a3a" stroke="#4a4a4a" stroke-width="1" rx="3" />
<text x="1679.2" y="175.8" font-size="11" fill="#ececec" font-weight="700" text-anchor="start" >Pages</text>
<text x="1679.2" y="204" font-size="11" fill="#ececec" font-weight="700" text-anchor="start" >Layers</text>
<text x="1679.2" y="232.4" font-size="11" fill="#ececec" font-weight="700" text-anchor="start" >Links</text>
<text x="1679.2" y="274.9" font-size="11" fill="#ececec" font-weight="700" text-anchor="start" >Stroke</text>
<text x="1679.2" y="302.8" font-size="11" fill="#ececec" font-weight="700" text-anchor="start" >Color</text>
<text x="1679.2" y="344" font-size="11" fill="#ececec" font-weight="700" text-anchor="start" >Swatches</text>
<text x="1679.2" y="386" font-size="11" fill="#ececec" font-weight="700" text-anchor="start" >Character ...</text>
<text x="1679.2" y="414.2" font-size="11" fill="#ececec" font-weight="700" text-anchor="start" >Paragraph ...</text>
<text x="1679.2" y="442.4" font-size="11" fill="#ececec" font-weight="700" text-anchor="start" >Paragraph</text>
<text x="1679.2" y="484.6" font-size="11" fill="#ececec" font-weight="700" text-anchor="start" >CC Librari...</text>
<path d="M1652.2 168.5Q1652.2 165.3 1655.5 165.3H1660.6V178.3H1652.2Z M1662.6 165.3H1667Q1670.2 165.3 1670.2 168.5V178.3H1662.6Z" fill="#cdcdcd" />
<path d="M1653.8 168.8L1657.3 165.3V168.8Z M1668.8 168.8L1665.3 165.3V168.8Z" fill="#3a3a3a" />
<line x1="1661.6" y1="161.7" x2="1661.6" y2="181" stroke="#8a8a8a" stroke-width="1.1" />
<path d="M1661 190.8L1669.4 196.7L1661 202.6L1652.6 196.7Z" fill="#cdcdcd" />
<path d="M1652.6 203.6L1655.6 201.4L1661 205.2L1666.4 201.4L1669.4 203.6L1661 208.5Z" fill="#cdcdcd" />
<rect x="1652" y="224" width="11.5" height="7.5" rx="3.75" fill="none" stroke="#cdcdcd" stroke-width="1.8"/>
<rect x="1658.8" y="224" width="11.5" height="7.5" rx="3.75" fill="none" stroke="#cdcdcd" stroke-width="1.8"/>
<rect x="1652" y="263" width="17.8" height="1.1" fill="#cdcdcd" rx="0" />
<rect x="1652" y="267.2" width="17.8" height="2" fill="#cdcdcd" rx="0" />
<rect x="1652" y="272.1" width="17.8" height="3" fill="#cdcdcd" rx="0" />
<path d="M1662 290.2C1667.5 290.2 1671.1 293.5 1671.1 297C1671.1 300 1668.5 300.5 1666.5 300.5C1664.5 300.5 1664 302 1663 303.5C1662 304.8 1660 305.1 1658 305.1C1653.5 305.1 1651 302.5 1651 299.5C1651 297 1653 295.5 1655.5 295C1657.5 294.6 1658.2 293.8 1658.3 292.5C1658.5 291 1660 290.2 1662 290.2Z" fill="#cdcdcd" />
<circle cx="1655.8" cy="299.8" r="1.5" fill="#555"/>
<circle cx="1660.4" cy="301.6" r="1.5" fill="#555"/>
<circle cx="1664.5" cy="300.4" r="1.3" fill="#555"/>
<circle cx="1667.3" cy="297.8" r="1.2" fill="#555"/>
<circle cx="1666.6" cy="294.8" r="1.1" fill="#555"/>
<rect x="1652" y="333.7" width="16.9" height="11.9" fill="#cdcdcd" rx="0" />
<rect x="1653.2" y="335" width="3.8" height="4.3" fill="#8e8e8e" rx="0" />
<rect x="1657.5" y="335" width="3.8" height="4.3" fill="#bdbdbd" rx="0" />
<rect x="1662.5" y="335" width="3.8" height="4.3" fill="#8e8e8e" rx="0" />
<rect x="1653.2" y="340" width="3.8" height="4.3" fill="#8e8e8e" rx="0" />
<rect x="1657.5" y="340" width="3.8" height="4.3" fill="#8e8e8e" rx="0" />
<rect x="1662.5" y="340" width="3.8" height="4.3" fill="#a8a8a8" rx="0" />
<path d="M1652.7 381.7h5.3v5.3h-5.3z M1655.3 384.4h5.3v5.3h-5.3z" fill="none" stroke="#cdcdcd" stroke-width="1.1" />
<path d="M1659.8 385L1664.9 372.8L1670.2 385M1661.7 380.5H1668.3" fill="none" stroke="#cdcdcd" stroke-width="1.3" />
<path d="M1652.7 409.2h5.3v5.3h-5.3z M1655.3 411.9h5.3v5.3h-5.3z" fill="none" stroke="#cdcdcd" stroke-width="1.1" />
<path d="M1664.8 401.8V414.5M1668.2 401.8V414.5" fill="none" stroke="#cdcdcd" stroke-width="1.3" />
<path d="M1668.8 401.8H1664A3.6 3.6 0 0 0 1664 409H1665.4Z" fill="#cdcdcd" />
<path d="M1661.5 431.8V446.2M1665.3 431.8V446.2" fill="none" stroke="#cdcdcd" stroke-width="1.5" />
<path d="M1666 431.8H1658.5A4 4 0 0 0 1658.5 439.8H1662Z" fill="#cdcdcd" />
<ellipse cx="1660.8" cy="479.7" rx="10.2" ry="7.2" fill="none" stroke="#cdcdcd" stroke-width="1.5"/>
<circle cx="1657" cy="480.5" r="4.2" fill="none" stroke="#cdcdcd" stroke-width="1.6"/>
<circle cx="1664.5" cy="479" r="4.2" fill="none" stroke="#cdcdcd" stroke-width="1.6"/>
<rect x="63.3" y="162.8" width="28" height="22" fill="#343434" rx="3" />
<path d="M72.3 166L84.2 177.3L77.8 177.6L72.3 182.5Z" fill="none" stroke="#cbcbcb" stroke-width="1.2" />
<path d="M72 190L84.5 202L77.2 202.8L72 207.8Z" fill="#cbcbcb" />
<path d="M72 215.5H78.3L82 219.2V222M77 229H72V215.5" fill="none" stroke="#cbcbcb" stroke-width="1.1" />
<path d="M78.3 215.5V219.2H82" fill="none" stroke="#cbcbcb" stroke-width="1.1" />
<path d="M80.5 222.5L86 227.5L82.5 228L80.5 231Z" fill="#cbcbcb" />
<line x1="69.5" y1="239.8" x2="69.5" y2="253.5" stroke="#cbcbcb" stroke-width="1.8" />
<line x1="85.8" y1="239.8" x2="85.8" y2="253.5" stroke="#cbcbcb" stroke-width="1.8" />
<path d="M72.5 246.7H83" fill="none" stroke="#cbcbcb" stroke-width="1.3" />
<path d="M71.3 246.7L75 243.7V249.7Z M84.2 246.7L80.5 243.7V249.7Z" fill="#cbcbcb" />
<path d="M70.5 269V279.5H84.5V269" fill="none" stroke="#cbcbcb" stroke-width="1.4" />
<path d="M71.5 263.5L77 268.5" fill="none" stroke="#cbcbcb" stroke-width="1.2" />
<path d="M78 269.5L78.5 265L74 266.5Z" fill="#cbcbcb" />
<rect x="73.5" y="273" width="1.3" height="1.3" fill="#cbcbcb" rx="0" />
<rect x="76.5" y="273" width="1.3" height="1.3" fill="#cbcbcb" rx="0" />
<rect x="79.5" y="273" width="1.3" height="1.3" fill="#cbcbcb" rx="0" />
<rect x="73.5" y="276" width="1.3" height="1.3" fill="#cbcbcb" rx="0" />
<rect x="76.5" y="276" width="1.3" height="1.3" fill="#cbcbcb" rx="0" />
<rect x="79.5" y="276" width="1.3" height="1.3" fill="#cbcbcb" rx="0" />
<path d="M86.5 281.8L90.8 277.5V281.8Z" fill="#cbcbcb" />
<path d="M70.5 295V291.8H84.5V295M77.5 291.8V305.3M74.5 305.3H80.5" fill="none" stroke="#cbcbcb" stroke-width="1.9" />
<path d="M86.5 308.6L90.8 304.3V308.6Z" fill="#cbcbcb" />
<line x1="70.3" y1="330" x2="84.5" y2="315.8" stroke="#cbcbcb" stroke-width="1.3" />
<path d="M80 342.5L83 339.5L86.5 343L83.5 346Z" fill="#cbcbcb" />
<path d="M79 343.5L85.5 350L80 354C77 355.5 73 355.5 69.5 356C70 352.5 70 348.5 71.5 345.5Z" fill="#cbcbcb" />
<path d="M70.5 355L76 349.5" fill="none" stroke="#535353" stroke-width="0.9" />
<path d="M86.5 356L90.8 351.7V356Z" fill="#cbcbcb" />
<path d="M81.5 363.5L85.7 367.7L74 379.4L69 380.5L70 375.5Z" fill="#cbcbcb" />
<path d="M80.2 366.2L82.8 368.8" fill="none" stroke="#535353" stroke-width="0.9" />
<path d="M70.8 377.5L72.3 379" fill="none" stroke="#535353" stroke-width="1" />
<path d="M86.5 382L90.8 377.7V382Z" fill="#cbcbcb" />
<rect x="69.5" y="389" width="16" height="14" fill="none" stroke="#cbcbcb" stroke-width="1.1" rx="0" />
<path d="M69.5 389L85.5 403M85.5 389L69.5 403" fill="none" stroke="#cbcbcb" stroke-width="1" />
<path d="M86.5 406L90.8 401.7V406Z" fill="#cbcbcb" />
<ellipse cx="77.5" cy="420.7" rx="8.8" ry="7" fill="#5d5d5d" stroke="#cbcbcb" stroke-width="1.1"/>
<path d="M86.5 431L90.8 426.7V431Z" fill="#cbcbcb" />
<rect x="57" y="433" width="40" height="1" fill="#4b4b4b" rx="0" />
<path d="M69.5 443.5L83 450.5M69.5 452L83 443.5" fill="none" stroke="#cbcbcb" stroke-width="1.5" />
<circle cx="84.5" cy="442.3" r="2.6" fill="none" stroke="#cbcbcb" stroke-width="1.2"/>
<circle cx="84.5" cy="453" r="2.6" fill="none" stroke="#cbcbcb" stroke-width="1.2"/>
<path d="M69 462.8L78.5 472L73.5 472.5L69.5 478Z" fill="#cbcbcb" />
<path d="M75 465.5H87V478.5H75" fill="none" stroke="#cbcbcb" stroke-width="1.1" stroke-dasharray="1.5 1"/>
<path d="M86.5 481L90.8 476.7V481Z" fill="#cbcbcb" />
<defs><linearGradient id="gr1" x1="0" x2="1"><stop offset="0" stop-color="#555"/><stop offset="1" stop-color="#cfcfcf"/></linearGradient><linearGradient id="gr2" x1="0" x2="0" y1="0" y2="1"><stop offset="0" stop-color="#5a5a5a"/><stop offset="1" stop-color="#c8c8c8"/></linearGradient></defs>
<rect x="69.5" y="489.3" width="16" height="14" fill="url(#gr1)" stroke="#cfcfcf" stroke-width="1" rx="0" />
<rect x="69.5" y="513.8" width="16" height="14" fill="url(#gr2)" stroke="#cfcfcf" stroke-width="1" rx="0" />
<rect x="57" y="532.5" width="40" height="1" fill="#4b4b4b" rx="0" />
<path d="M70.5 541.5H84V551.5L80 555.5H70.5Z" fill="#cbcbcb" />
<path d="M72.5 544.5H82M72.5 547H82M72.5 549.5H78" fill="none" stroke="#535353" stroke-width="0.9" />
<path d="M80 555.5V551.5H84" fill="none" stroke="#535353" stroke-width="1" />
<path d="M70.5 578.5L79 570" fill="none" stroke="#cbcbcb" stroke-width="3.2" stroke-linecap="round"/>
<path d="M71 578L78.5 570.5" fill="none" stroke="#535353" stroke-width="1.3" stroke-linecap="round"/>
<path d="M79 566.5L85.5 573M81.5 568.5L84 566A1.8 1.8 0 0 1 86.5 568.5L84 571" fill="none" stroke="#cbcbcb" stroke-width="2.2" />
<path d="M86.5 582.5L90.8 578.2V582.5Z" fill="#cbcbcb" />
<path d="M71 597L73 601.5C74.5 604 76.5 605.3 79.5 605.3C83 605.3 85.3 603 85.5 599.5L86 592.5C86 591.3 84.3 591.3 84.2 592.5L83.7 596.5L83.3 590C83.2 588.8 81.5 588.8 81.5 590L81.3 596L80.7 588.8C80.6 587.6 78.8 587.6 78.8 588.8L78.7 596L77.8 590C77.6 588.9 76 588.9 76 590L76.5 599L73.5 595.5C72.5 594.3 70.5 595.3 71 597Z" fill="#cbcbcb" />
<circle cx="75.5" cy="619.2" r="5.4" fill="none" stroke="#cbcbcb" stroke-width="1.5"/>
<line x1="79.5" y1="623.3" x2="85.3" y2="629.3" stroke="#cbcbcb" stroke-width="2" />
<rect x="66.5" y="642" width="7" height="7.5" fill="#222" stroke="#bdbdbd" stroke-width="0.9" rx="0" />
<rect x="62.5" y="638" width="7.5" height="7.5" fill="#fff" stroke="#bdbdbd" stroke-width="0.6" rx="0" />
<line x1="63" y1="645.3" x2="69.7" y2="638.3" stroke="#ff2020" stroke-width="1" />
<path d="M83.5 642.5L82 644.5L84 646M82.5 644.3C87.5 644 89.5 646 89.3 650M87.5 648.8L89.3 651L91 648.8" fill="none" stroke="#bdbdbd" stroke-width="1.1" />
<rect x="72.3" y="665" width="19.7" height="20" fill="#ffffff" rx="0" />
<rect x="76.4" y="669.5" width="10.6" height="11" fill="#474747" rx="0" />
<line x1="73.5" y1="684" x2="90.5" y2="666.5" stroke="#ff1010" stroke-width="2" />
<rect x="62.4" y="655.9" width="19.9" height="20.1" fill="#ffffff" rx="0" />
<line x1="63.5" y1="674.8" x2="81.3" y2="657" stroke="#ff1010" stroke-width="2" />
<rect x="63.5" y="693.5" width="13.5" height="11" fill="#333333" rx="2" />
<rect x="67" y="696" width="6.5" height="6.5" fill="none" stroke="#d0d0d0" stroke-width="1.1" rx="0" />
<text x="86.5" y="703.5" font-size="11.5" fill="#8c8c8c" font-weight="400" text-anchor="middle" style="font-family:'Liberation Serif'">T</text>
<rect x="63.2" y="712.3" width="28.1" height="22" fill="#333333" rx="3" />
<rect x="69.3" y="716" width="15.5" height="13.7" fill="#ffffff" rx="0" />
<line x1="70.3" y1="729" x2="84" y2="716.7" stroke="#ff1010" stroke-width="1.8" />
<path d="M86.8 733.5L90.5 729.8V733.5Z" fill="#cfcfcf" />
<rect x="63.2" y="742" width="28.1" height="21.4" fill="#333333" rx="3" />
<rect x="72.2" y="747.3" width="11" height="11" fill="none" stroke="#cfcfcf" stroke-width="1" rx="0" />
<rect x="74.2" y="749.3" width="7" height="7" fill="none" stroke="#9a9a9a" stroke-width="0.8" rx="0" />
<path d="M75 751.5A1.8 1.8 0 0 1 78.5 751.5V753.5M77 752A1.8 1.8 0 0 1 80.5 752V755" fill="none" stroke="#cfcfcf" stroke-width="0.8" />
<path d="M86.8 762.5L90.5 758.8V762.5Z" fill="#cfcfcf" />
<rect x="397.5" y="215.5" width="556" height="721" fill="none" stroke="#b85a69" stroke-width="1.1" rx="0" />
<rect x="406" y="225.5" width="542" height="705.5" fill="#000" rx="0" />
<rect x="405" y="223.5" width="541" height="704.5" fill="#ffffff" rx="0" />
<line x1="404.5" y1="224" x2="404.5" y2="928" stroke="#3a3a3a" stroke-width="1" />
<line x1="443.5" y1="260.5" x2="897" y2="260.5" stroke="#ff9cff" stroke-width="1.1" />
<line x1="443.5" y1="881.2" x2="897" y2="881.2" stroke="#ff9cff" stroke-width="1.8" />
<line x1="443.5" y1="260.5" x2="443.5" y2="881.3" stroke="#da9cff" stroke-width="1.1" />
<line x1="897" y1="260.5" x2="897" y2="881.3" stroke="#da9cff" stroke-width="1.1" />
<line x1="115" y1="292.3" x2="405" y2="292.3" stroke="#3cb7bd" stroke-width="1.1" />
<line x1="946" y1="292.3" x2="1623" y2="292.3" stroke="#3cb7bd" stroke-width="1.1" />
<line x1="405" y1="292.3" x2="946" y2="292.3" stroke="#83f2f6" stroke-width="1.1" />
<rect x="432.6" y="881.6" width="49.5" height="27.7" fill="none" stroke="#ff9aa0" stroke-width="0.9" rx="0" stroke-dasharray="1 1.2"/>
<text x="456.7" y="899" font-size="9" fill="#333" font-weight="400" text-anchor="middle" >76</text>
<rect x="482" y="891.5" width="186.5" height="8" fill="none" stroke="#9cc4f0" stroke-width="0.8" rx="0" stroke-dasharray="1 1.2"/>
<text x="482" y="898" font-size="8.4" fill="#78c277" font-weight="700" text-anchor="start" >November 2018</text>
<text x="546.5" y="898" font-size="8.4" fill="#333" font-weight="400" text-anchor="start" >Wil</text>
<rect x="668.6" y="881.5" width="259.4" height="46.5" fill="none" stroke="#a8cdf5" stroke-width="0.9" rx="0" stroke-dasharray="1 1.2"/>
<path d="M668.6 881.5L928 928M928 881.5L668.6 928" fill="none" stroke="#8ab8ee" stroke-width="0.9" stroke-dasharray="1 1"/>
<clipPath id="imgclip"><rect x="1066.8" y="395" width="209.2" height="277.4"/></clipPath>
<defs><linearGradient id="gh" x1="0" x2="1"><stop offset="0" stop-color="#1a5239"/><stop offset="0.3" stop-color="#1d5e40"/><stop offset="0.75" stop-color="#206646"/><stop offset="1" stop-color="#1b5b3d"/></linearGradient><linearGradient id="gl" x1="0" x2="0" y1="0" y2="1"><stop offset="0" stop-color="#7f3c2e"/><stop offset="0.5" stop-color="#94503f"/><stop offset="1" stop-color="#7e3f31"/></linearGradient><radialGradient id="gt" cx="0.5" cy="0.5" r="0.6"><stop offset="0" stop-color="#f1f0ec"/><stop offset="1" stop-color="#dcdad4"/></radialGradient></defs>
<g clip-path="url(#imgclip)">
<rect x="1066" y="394" width="212" height="280" fill="url(#gt)" rx="0" />
<path d="M1067 453L1072 461L1086 500L1101 530L1101 548H1067Z" fill="#ebe7e2" />
<path d="M1068 470L1076 468L1079 480L1070 484Z" fill="#c9c4c2" />
<path d="M1067 523L1076 532L1090 525" fill="none" stroke="#e03a3a" stroke-width="1" />
<path d="M1068 510C1072 505 1078 505 1080 510" fill="none" stroke="#c0392b" stroke-width="1.2" />
<rect x="1068" y="505" width="3" height="6" fill="#3a8a4a" rx="0" />
<path d="M1166 466L1276 456V503L1201.7 554L1150 550L1150 530L1166 516Z" fill="#ebe9e4" />
<path d="M1178 474L1214 469L1222 490L1190 497Z" fill="#f6f4f1" />
<path d="M1186 478h26M1190 487h26" fill="none" stroke="#8f8f8f" stroke-width="1.3" />
<path d="M1190 476l4 4M1198 485l3 4" fill="none" stroke="#d04040" stroke-width="0.8" />
<path d="M1166 470L1180 468L1190 496L1166 508Z" fill="#6e6466" />
<path d="M1166 500L1192 493L1196 498L1166 512Z" fill="#3f3a3b" />
<path d="M1150 394H1276V456L1166 466Z" fill="#226b4a" />
<path d="M1166 425C1200 427 1240 428 1276 426" fill="none" stroke="#3e8868" stroke-width="1.6" />
<path d="M1166 436C1200 440 1240 441 1276 440" fill="none" stroke="#1b5b3e" stroke-width="1.2" />
<path d="M1233 395V416Q1233 419 1236 419H1276V395Z" fill="#1e6344" />
<path d="M1242 397v10M1256 397v12" fill="none" stroke="#2f7c5a" stroke-width="2" />
<path d="M1067 394H1166V516Q1166 529 1150 529L1101 530Q1090 515 1086 500L1071 461L1067 453Z" fill="url(#gh)" />
<path d="M1163.5 400V514" fill="none" stroke="#2e7b58" stroke-width="1.6" />
<path d="M1067.5 453L1072 462L1086 500L1101 530" fill="none" stroke="#0f2a1e" stroke-width="2.2" />
<path d="M1072 400V450" fill="none" stroke="#2a7552" stroke-width="1.2" />
<rect x="1124.2" y="527" width="25.2" height="17.3" fill="#111111" rx="3" />
<path d="M1067 547.5C1090 546 1115 544 1140 548L1148 556C1125 566 1095 580 1067 587Z" fill="#d8a58e" />
<path d="M1100 552C1108 551 1116 553 1118 558" fill="none" stroke="#b98370" stroke-width="1" />
<path d="M1201.7 554L1276 503.5V667.7L1214 662L1213.4 642C1212 615 1208 595 1201.7 554Z" fill="#1d6646" />
<path d="M1198 586.5L1276 534" fill="none" stroke="#2f8a5f" stroke-width="1.8" />
<path d="M1214 628L1276 595" fill="none" stroke="#3a9a6c" stroke-width="1.8" />
<path d="M1214 630L1276 597V667.7L1214 662Z" fill="#174f36" />
<circle cx="1255.8" cy="616.3" r="3.6" fill="#b7c8d2" stroke="#8aa0b0" stroke-width="0.8"/>
<path d="M1213 662L1276 667V673H1213Z" fill="#ece6e6" />
<rect x="1226" y="664" width="6" height="9" fill="#b02030" rx="0" />
<path d="M1067 587C1095 578 1125 565 1148 543.6L1194 555L1201.7 556C1208 590 1213 630 1213 673H1067Z" fill="url(#gl)" />
<path d="M1067 645C1085 610 1120 585 1165 558" fill="none" stroke="#6e2e22" stroke-width="2.5" />
<path d="M1067 652C1088 618 1122 592 1168 562" fill="none" stroke="#a05a48" stroke-width="1.2" />
<ellipse cx="1150" cy="630" rx="42" ry="34" fill="#9a5444" opacity="0.4"/>
<ellipse cx="1145.5" cy="558" rx="5.3" ry="2.8" fill="#a38e66"/>
<rect x="1144" y="559" width="3" height="6" fill="#6f5f45" rx="0" />
<ellipse cx="1128" cy="563" rx="5" ry="2.3" fill="#8f7c58"/>
<ellipse cx="1196" cy="557.5" rx="5" ry="2.6" fill="none" stroke="#a08c62" stroke-width="1.5"/>
</g>
<rect x="985.7" y="394.5" width="370.8" height="277.9" fill="none" stroke="#5b87c4" stroke-width="1.2" rx="0" />
<rect x="982.7" y="391.5" width="6" height="6" fill="#ffffff" stroke="#5b87c4" stroke-width="1" rx="0" />
<rect x="1168" y="391.5" width="6" height="6" fill="#ffffff" stroke="#5b87c4" stroke-width="1" rx="0" />
<rect x="1353.5" y="391.5" width="6" height="6" fill="#ffffff" stroke="#5b87c4" stroke-width="1" rx="0" />
<rect x="982.7" y="530.5" width="6" height="6" fill="#ffffff" stroke="#5b87c4" stroke-width="1" rx="0" />
<rect x="1353.5" y="530.5" width="6" height="6" fill="#ffffff" stroke="#5b87c4" stroke-width="1" rx="0" />
<rect x="982.7" y="669.4" width="6" height="6" fill="#ffffff" stroke="#5b87c4" stroke-width="1" rx="0" />
<rect x="1168" y="669.4" width="6" height="6" fill="#ffffff" stroke="#5b87c4" stroke-width="1" rx="0" />
<rect x="1353.5" y="669.4" width="6" height="6" fill="#ffffff" stroke="#5b87c4" stroke-width="1" rx="0" />
<rect x="1279" y="390.9" width="7.2" height="7.2" fill="#3a96ff" rx="0" />
<rect x="1353" y="415.2" width="7" height="7" fill="#ffe100" stroke="#4a90e2" stroke-width="1" rx="0" />
<rect x="992.8" y="390.8" width="15.8" height="8.4" fill="#ffffff" rx="4.2" opacity="0.85"/>
<rect x="993.8" y="391.8" width="13.8" height="6.4" rx="3.2" fill="#1b8cff"/>
<path d="M998.5 393.3H996.8A1.7 1.7 0 0 0 996.8 396.7H999.5M1002.5 393.3H1004.2A1.7 1.7 0 0 1 1004.2 396.7H1001.5M998.5 395H1002.5" fill="none" stroke="#ffffff" stroke-width="0.9" />
</svg></body></html>
